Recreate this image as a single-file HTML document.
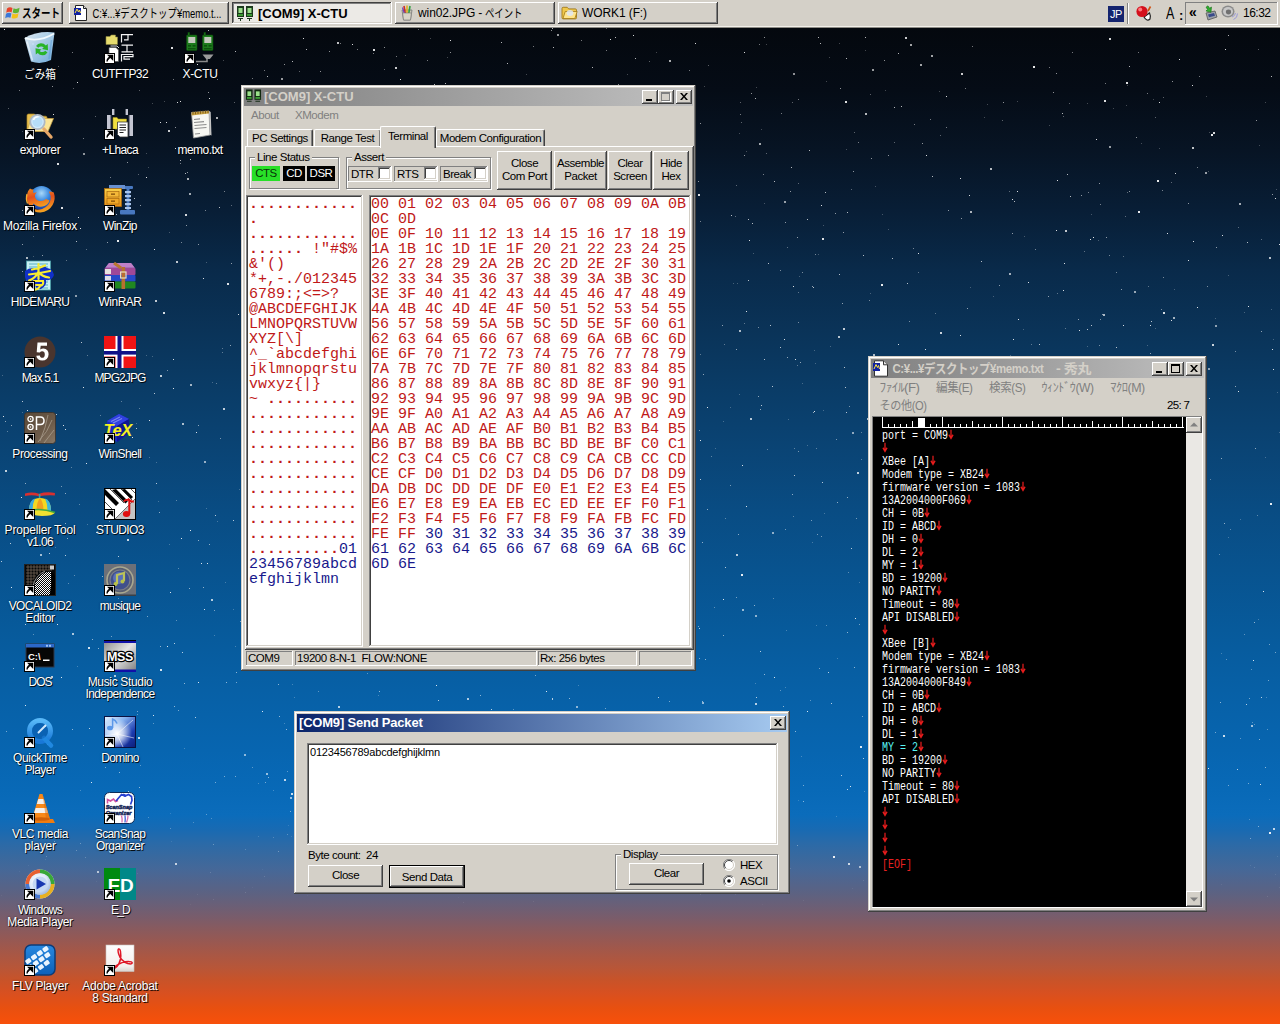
<!DOCTYPE html>
<html><head><meta charset="utf-8"><title>desktop</title>
<style>
*{box-sizing:border-box;margin:0;padding:0}
html,body{width:1280px;height:1024px;overflow:hidden}
body{position:relative;font-family:"Liberation Sans",sans-serif;font-size:12px;color:#000;
background:linear-gradient(to bottom,#04070c 0px,#04080e 28px,#050c16 90px,#071424 150px,#081e36 210px,#092a4a 270px,#0a3358 330px,#0a3c67 390px,#0a4475 450px,#094c83 510px,#08538f 570px,#075a9b 630px,#0760a6 690px,#0765b0 750px,#0869b7 790px,#0b6cbb 815px,#196ab2 830px,#2a6aa8 843px,#38699f 856px,#446899 868px,#50658e 880px,#5c6282 893px,#6b5f76 906px,#7a5c6a 918px,#8a5a5d 930px,#9a5850 943px,#a95744 955px,#b85638 968px,#c85329 980px,#d85020 993px,#e85010 1008px,#f8500a 1024px);}
.abs{position:absolute}
.win{position:absolute;font-size:11.5px;letter-spacing:-.45px;background:#d4d0c8;box-shadow:inset -1px -1px #404040,inset 1px 1px #d4d0c8,inset -2px -2px #808080,inset 2px 2px #fff}
.btn{position:absolute;background:#d4d0c8;box-shadow:inset -1px -1px #404040,inset 1px 1px #fff,inset -2px -2px #808080,inset 2px 2px #d4d0c8;text-align:center;white-space:nowrap}
.sunk{position:absolute;box-shadow:inset -1px -1px #fff,inset 1px 1px #808080,inset -2px -2px #d4d0c8,inset 2px 2px #404040}
.sunk1{position:absolute;box-shadow:inset -1px -1px #fff,inset 1px 1px #808080}
.grp{position:absolute;border:1px solid #808080;box-shadow:1px 1px #fff,inset 1px 1px #fff}
.grp>span{position:absolute;top:-8px;left:5px;background:#d4d0c8;padding:0 2px;line-height:14px;white-space:nowrap}
.tb{position:absolute;height:18px}
.tbi{background:linear-gradient(to right,#808080,#c0c0c0)}
.tba{background:linear-gradient(to right,#0a246a,#a6caf0)}
.tt{position:absolute;font-weight:bold;font-size:13px;line-height:18px;white-space:nowrap;letter-spacing:0}
.cb{position:absolute;width:16px;height:14px;background:#d4d0c8;box-shadow:inset -1px -1px #404040,inset 1px 1px #fff,inset -2px -2px #808080,inset 2px 2px #d4d0c8}
.t{position:absolute;white-space:nowrap}
.mono{font-family:"Liberation Mono",monospace}
.tk{position:absolute;top:2px;height:22px;width:160px;background:#d4d0c8;box-shadow:inset -1px -1px #404040,inset 1px 1px #fff,inset -2px -2px #808080,inset 2px 2px #d4d0c8;font-size:12px;line-height:22px;white-space:nowrap;overflow:hidden}
.tab{position:absolute;background:#d4d0c8;border:1px solid #fff;border-right:1px solid #404040;border-bottom:none;border-radius:2px 2px 0 0;box-shadow:inset -1px 0 #808080;text-align:center;white-space:nowrap}
.ico{position:absolute;width:32px;height:32px}
.lbl{position:absolute;width:110px;text-align:center;color:#fff;font-size:12px;line-height:12px;white-space:nowrap;text-shadow:1px 1px 1px rgba(0,0,0,.9)}

.term{font-size:15px;line-height:15px;letter-spacing:0;white-space:pre}
.term .r{color:#c01818}
.term .b{color:#18188c}

.memo{font-size:10px;line-height:10px;letter-spacing:0;color:#fff;white-space:pre;transform:scaleY(1.3);transform-origin:0 0}
.memo .cy{color:#58f4f4}
.memo svg{display:inline-block;vertical-align:top;margin-top:-.6px}
.memo b{font-weight:normal;color:#e82020}

.ic{position:absolute;width:32px;height:32px;overflow:visible}
.lb{position:absolute;width:120px;text-align:center;color:#fff;font-size:12px;line-height:12px;white-space:nowrap;text-shadow:1px 1px 0 rgba(0,0,0,.85),0 0 2px rgba(0,0,0,.6)}
.lb span{display:block}
svg text{font-family:"Liberation Sans","Noto Sans CJK JP",sans-serif}
</style></head>
<body>
<div class="abs" style="left:0;top:0;width:1px;height:1px;box-shadow:1146px 491px rgba(255,255,255,0.55),1040px 490px rgba(255,255,255,0.70),378px 222px rgba(255,255,255,0.70),1257px 515px rgba(255,255,255,0.35),914px 124px rgba(255,255,255,0.45),185px 173px rgba(255,255,255,0.70),85px 857px rgba(255,255,255,0.23),927px 433px rgba(255,255,255,0.85),1260px 784px rgba(255,255,255,0.85),1276px 189px rgba(255,255,255,0.25),1082px 879px rgba(255,255,255,0.05),73px 88px rgba(255,255,255,0.35),1228px 275px rgba(255,255,255,0.25),950px 824px rgba(255,255,255,0.25),1210px 479px rgba(255,255,255,0.35),478px 559px rgba(255,255,255,0.85),1023px 329px rgba(255,255,255,0.25),174px 706px rgba(255,255,255,0.55),569px 698px rgba(255,255,255,0.55),170px 592px rgba(255,255,255,0.85),645px 288px rgba(255,255,255,0.35),591px 553px rgba(255,255,255,0.25),1153px 99px rgba(255,255,255,0.25),220px 438px rgba(255,255,255,0.45),136px 423px rgba(255,255,255,0.25),1px 895px rgba(255,255,255,0.05),107px 242px rgba(255,255,255,0.55),813px 412px rgba(255,255,255,0.55),1159px 102px rgba(255,255,255,0.85),552px 231px rgba(255,255,255,0.45),637px 117px rgba(255,255,255,0.45),839px 43px rgba(255,255,255,0.25),504px 165px rgba(255,255,255,0.85),22px 131px rgba(255,255,255,0.25),997px 504px rgba(255,255,255,0.35),1145px 726px rgba(255,255,255,0.35),1042px 486px rgba(255,255,255,0.35),268px 777px rgba(255,255,255,0.55),785px 687px rgba(255,255,255,0.25),861px 432px rgba(255,255,255,0.35),552px 28px rgba(255,255,255,0.70),40px 339px rgba(255,255,255,0.35),807px 219px rgba(255,255,255,0.70),1181px 685px rgba(255,255,255,0.25),299px 71px rgba(255,255,255,0.35),528px 480px rgba(255,255,255,0.25),1249px 819px rgba(255,255,255,0.27),606px 878px rgba(255,255,255,0.10),152px 103px rgba(255,255,255,0.25),1193px 241px rgba(255,255,255,0.85),31px 276px rgba(255,255,255,0.70),761px 405px rgba(255,255,255,0.70),260px 492px rgba(255,255,255,0.70),1176px 523px rgba(255,255,255,0.35),374px 423px rgba(255,255,255,0.85),636px 185px rgba(255,255,255,0.35),1250px 865px rgba(255,255,255,0.10),388px 770px rgba(255,255,255,0.35),1134px 785px rgba(255,255,255,0.35),795px 731px rgba(255,255,255,0.55),160px 646px rgba(255,255,255,0.55),212px 76px rgba(255,255,255,0.25),1049px 67px rgba(255,255,255,0.45),802px 272px rgba(255,255,255,0.45),1221px 458px rgba(255,255,255,0.55),1065px 328px rgba(255,255,255,0.35),140px 765px rgba(255,255,255,0.35),981px 261px rgba(255,255,255,0.70),1261px 697px rgba(255,255,255,0.70),573px 103px rgba(255,255,255,0.35),33px 236px rgba(255,255,255,0.25),842px 303px rgba(255,255,255,0.55),123px 283px rgba(255,255,255,0.25),577px 208px rgba(255,255,255,0.45),1171px 571px rgba(255,255,255,0.35),741px 122px rgba(255,255,255,0.35),677px 489px rgba(255,255,255,0.85),1068px 778px rgba(255,255,255,0.70),1208px 171px rgba(255,255,255,0.25),972px 46px rgba(255,255,255,0.45),638px 745px rgba(255,255,255,0.25),1225px 49px rgba(255,255,255,0.85),987px 104px rgba(255,255,255,0.25),637px 776px rgba(255,255,255,0.45),148px 167px rgba(255,255,255,0.25),1118px 491px rgba(255,255,255,0.45),91px 782px rgba(255,255,255,0.85),265px 782px rgba(255,255,255,0.45),173px 388px rgba(255,255,255,0.85),159px 512px rgba(255,255,255,0.55),61px 837px rgba(255,255,255,0.26),29px 614px rgba(255,255,255,0.70),783px 706px rgba(255,255,255,0.55),25px 624px rgba(255,255,255,0.70),164px 101px rgba(255,255,255,0.25),236px 682px rgba(255,255,255,0.45),676px 454px rgba(255,255,255,0.55),1189px 780px rgba(255,255,255,0.55),947px 479px rgba(255,255,255,0.70),1062px 113px rgba(255,255,255,0.70),635px 58px rgba(255,255,255,0.70),984px 117px rgba(255,255,255,0.25),231px 263px rgba(255,255,255,0.55),1258px 826px rgba(255,255,255,0.47),523px 525px rgba(255,255,255,0.25),616px 404px rgba(255,255,255,0.35),1252px 722px rgba(255,255,255,0.35),347px 558px rgba(255,255,255,0.45),905px 703px rgba(255,255,255,0.55),669px 275px rgba(255,255,255,0.55),513px 709px rgba(255,255,255,0.35),882px 677px rgba(255,255,255,0.35),787px 247px rgba(255,255,255,0.35),648px 625px rgba(255,255,255,0.35),275px 167px rgba(255,255,255,0.55),83px 387px rgba(255,255,255,0.85),566px 93px rgba(255,255,255,0.35),922px 143px rgba(255,255,255,0.55),438px 309px rgba(255,255,255,0.55),1064px 419px rgba(255,255,255,0.55),645px 716px rgba(255,255,255,0.85),1279px 887px rgba(255,255,255,0.08),152px 356px rgba(255,255,255,0.25),1244px 312px rgba(255,255,255,0.25),575px 722px rgba(255,255,255,0.70),632px 390px rgba(255,255,255,0.85),1155px 838px rgba(255,255,255,0.12),278px 684px rgba(255,255,255,0.55),388px 493px rgba(255,255,255,0.25),545px 815px rgba(255,255,255,0.22),288px 825px rgba(255,255,255,0.14),236px 672px rgba(255,255,255,0.55),1096px 139px rgba(255,255,255,0.85),755px 683px rgba(255,255,255,0.25),405px 728px rgba(255,255,255,0.35),973px 871px rgba(255,255,255,0.11),22px 210px rgba(255,255,255,0.55),74px 575px rgba(255,255,255,0.35),557px 259px rgba(255,255,255,0.45),1065px 580px rgba(255,255,255,0.70),326px 657px rgba(255,255,255,0.55),458px 897px rgba(255,255,255,0.04),794px 448px rgba(255,255,255,0.35),928px 489px rgba(255,255,255,0.35),13px 668px rgba(255,255,255,0.55),1164px 591px rgba(255,255,255,0.85),702px 542px rgba(255,255,255,0.55),419px 362px rgba(255,255,255,0.25),252px 767px rgba(255,255,255,0.35),799px 276px rgba(255,255,255,0.25),1099px 345px rgba(255,255,255,0.45),32px 296px rgba(255,255,255,0.45),169px 544px rgba(255,255,255,0.25),700px 479px rgba(255,255,255,0.70),563px 459px rgba(255,255,255,0.55),447px 57px rgba(255,255,255,0.25),71px 467px rgba(255,255,255,0.35),686px 573px rgba(255,255,255,0.85),287px 834px rgba(255,255,255,0.27),1057px 180px rgba(255,255,255,0.85),901px 558px rgba(255,255,255,0.55),176px 620px rgba(255,255,255,0.35),1078px 477px rgba(255,255,255,0.70),1150px 325px rgba(255,255,255,0.85),1070px 196px rgba(255,255,255,0.70),1146px 891px rgba(255,255,255,0.07),780px 347px rgba(255,255,255,0.70),623px 241px rgba(255,255,255,0.35),1073px 585px rgba(255,255,255,0.45),1019px 614px rgba(255,255,255,0.35),1097px 448px rgba(255,255,255,0.25),10px 543px rgba(255,255,255,0.70),56px 414px rgba(255,255,255,0.70),1056px 73px rgba(255,255,255,0.55),1152px 585px rgba(255,255,255,0.25),190px 530px rgba(255,255,255,0.85),134px 198px rgba(255,255,255,0.70),847px 497px rgba(255,255,255,0.55),504px 303px rgba(255,255,255,0.55),260px 532px rgba(255,255,255,0.45),975px 472px rgba(255,255,255,0.70),222px 352px rgba(255,255,255,0.35),1265px 457px rgba(255,255,255,0.25),265px 294px rgba(255,255,255,0.85),46px 825px rgba(255,255,255,0.14),318px 226px rgba(255,255,255,0.35),581px 40px rgba(255,255,255,0.45),727px 768px rgba(255,255,255,0.35),1021px 662px rgba(255,255,255,0.25),1192px 539px rgba(255,255,255,0.25),1045px 900px rgba(255,255,255,0.10),404px 284px rgba(255,255,255,0.85),894px 571px rgba(255,255,255,0.25),846px 412px rgba(255,255,255,0.70),327px 658px rgba(255,255,255,0.70),1093px 237px rgba(255,255,255,0.85),1084px 251px rgba(255,255,255,0.35),1111px 899px rgba(255,255,255,0.10),279px 628px rgba(255,255,255,0.35),711px 786px rgba(255,255,255,0.35),1235px 351px rgba(255,255,255,0.45),446px 227px rgba(255,255,255,0.35),274px 127px rgba(255,255,255,0.35),180px 163px rgba(255,255,255,0.45),198px 425px rgba(255,255,255,0.55),863px 880px rgba(255,255,255,0.12),258px 836px rgba(255,255,255,0.17),36px 440px rgba(255,255,255,0.25),1167px 233px rgba(255,255,255,0.85),739px 394px rgba(255,255,255,0.25),1035px 749px rgba(255,255,255,0.85),703px 804px rgba(255,255,255,0.49),387px 730px rgba(255,255,255,0.25),217px 521px rgba(255,255,255,0.25),1129px 66px rgba(255,255,255,0.70),1164px 555px rgba(255,255,255,0.55),388px 178px rgba(255,255,255,0.35),417px 145px rgba(255,255,255,0.35),323px 888px rgba(255,255,255,0.07),195px 717px rgba(255,255,255,0.70),275px 91px rgba(255,255,255,0.85),158px 501px rgba(255,255,255,0.25),800px 362px rgba(255,255,255,0.55),1055px 464px rgba(255,255,255,0.45),430px 468px rgba(255,255,255,0.70),27px 410px rgba(255,255,255,0.85),83px 745px rgba(255,255,255,0.35),835px 213px rgba(255,255,255,0.55),758px 396px rgba(255,255,255,0.55),1238px 227px rgba(255,255,255,0.35),1049px 125px rgba(255,255,255,0.25),173px 359px rgba(255,255,255,0.85),828px 672px rgba(255,255,255,0.70),391px 641px rgba(255,255,255,0.70),698px 626px rgba(255,255,255,0.45),238px 314px rgba(255,255,255,0.85),327px 788px rgba(255,255,255,0.55),675px 164px rgba(255,255,255,0.70),757px 739px rgba(255,255,255,0.55),371px 811px rgba(255,255,255,0.36),378px 239px rgba(255,255,255,0.25),699px 844px rgba(255,255,255,0.19),206px 508px rgba(255,255,255,0.25),1277px 392px rgba(255,255,255,0.25),559px 265px rgba(255,255,255,0.85),691px 334px rgba(255,255,255,0.35),831px 703px rgba(255,255,255,0.70),1091px 214px rgba(255,255,255,0.25),1054px 426px rgba(255,255,255,0.55),436px 685px rgba(255,255,255,0.85),809px 150px rgba(255,255,255,0.70),235px 51px rgba(255,255,255,0.70),485px 138px rgba(255,255,255,0.45),822px 482px rgba(255,255,255,0.70),400px 79px rgba(255,255,255,0.85),22px 412px rgba(255,255,255,0.25),513px 292px rgba(255,255,255,0.45),1126px 377px rgba(255,255,255,0.70),851px 548px rgba(255,255,255,0.70),204px 609px rgba(255,255,255,0.85),156px 483px rgba(255,255,255,0.70),92px 639px rgba(255,255,255,0.55),790px 191px rgba(255,255,255,0.55),1014px 201px rgba(255,255,255,0.70),1221px 653px rgba(255,255,255,0.25),1012px 467px rgba(255,255,255,0.55),1078px 319px rgba(255,255,255,0.55),639px 640px rgba(255,255,255,0.45),585px 571px rgba(255,255,255,0.55),552px 698px rgba(255,255,255,0.70),606px 318px rgba(255,255,255,0.25),501px 42px rgba(255,255,255,0.70),320px 71px rgba(255,255,255,0.55),798px 800px rgba(255,255,255,0.18),814px 350px rgba(255,255,255,0.25),653px 623px rgba(255,255,255,0.25),458px 844px rgba(255,255,255,0.23),978px 764px rgba(255,255,255,0.45),499px 801px rgba(255,255,255,0.18),201px 563px rgba(255,255,255,0.85),295px 507px rgba(255,255,255,0.35),235px 646px rgba(255,255,255,0.25),854px 667px rgba(255,255,255,0.55),417px 148px rgba(255,255,255,0.25),1081px 393px rgba(255,255,255,0.35),744px 155px rgba(255,255,255,0.55),853px 171px rgba(255,255,255,0.55),536px 643px rgba(255,255,255,0.85),859px 624px rgba(255,255,255,0.45),1087px 824px rgba(255,255,255,0.20),263px 325px rgba(255,255,255,0.35),233px 520px rgba(255,255,255,0.70),1039px 344px rgba(255,255,255,0.70),735px 894px rgba(255,255,255,0.07),1248px 306px rgba(255,255,255,0.85),1156px 770px rgba(255,255,255,0.85),389px 633px rgba(255,255,255,0.85),490px 313px rgba(255,255,255,0.35),1028px 282px rgba(255,255,255,0.85),80px 228px rgba(255,255,255,0.85),19px 90px rgba(255,255,255,0.45),870px 293px rgba(255,255,255,0.25),77px 666px rgba(255,255,255,0.25),1109px 255px rgba(255,255,255,0.45),177px 102px rgba(255,255,255,0.85),1127px 192px rgba(255,255,255,0.35),764px 674px rgba(255,255,255,0.55),725px 518px rgba(255,255,255,0.35),703px 374px rgba(255,255,255,0.55),273px 790px rgba(255,255,255,0.25),245px 849px rgba(255,255,255,0.21),1277px 856px rgba(255,255,255,0.12),869px 483px rgba(255,255,255,0.85),798px 292px rgba(255,255,255,0.35),314px 405px rgba(255,255,255,0.85),1221px 884px rgba(255,255,255,0.07),1123px 325px rgba(255,255,255,0.85),376px 873px rgba(255,255,255,0.12),756px 697px rgba(255,255,255,0.70),946px 127px rgba(255,255,255,0.45),1113px 108px rgba(255,255,255,0.25),1155px 470px rgba(255,255,255,0.70),949px 524px rgba(255,255,255,0.45),19px 871px rgba(255,255,255,0.06),436px 345px rgba(255,255,255,0.85),167px 646px rgba(255,255,255,0.85),1013px 339px rgba(255,255,255,0.85),671px 810px rgba(255,255,255,0.30),448px 174px rgba(255,255,255,0.45),669px 701px rgba(255,255,255,0.45),660px 148px rgba(255,255,255,0.85),1165px 479px rgba(255,255,255,0.70),571px 731px rgba(255,255,255,0.55),624px 570px rgba(255,255,255,0.55),453px 353px rgba(255,255,255,0.55),1057px 775px rgba(255,255,255,0.35),740px 114px rgba(255,255,255,0.45),744px 52px rgba(255,255,255,0.85),1197px 433px rgba(255,255,255,0.55),399px 843px rgba(255,255,255,0.37),754px 605px rgba(255,255,255,0.55),317px 581px rgba(255,255,255,0.70),363px 604px rgba(255,255,255,0.35),930px 119px rgba(255,255,255,0.45),45px 859px rgba(255,255,255,0.11),118px 556px rgba(255,255,255,0.70),1162px 190px rgba(255,255,255,0.45),865px 50px rgba(255,255,255,0.25),1119px 623px rgba(255,255,255,0.45),1117px 834px rgba(255,255,255,0.12),167px 370px rgba(255,255,255,0.45),215px 782px rgba(255,255,255,0.45),53px 114px rgba(255,255,255,0.85),294px 697px rgba(255,255,255,0.25),864px 791px rgba(255,255,255,0.28),451px 757px rgba(255,255,255,0.55),1068px 811px rgba(255,255,255,0.29),940px 811px rgba(255,255,255,0.36),691px 386px rgba(255,255,255,0.45),279px 716px rgba(255,255,255,0.55),1100px 527px rgba(255,255,255,0.85),1265px 102px rgba(255,255,255,0.25),715px 448px rgba(255,255,255,0.25),774px 853px rgba(255,255,255,0.09),1108px 503px rgba(255,255,255,0.85),1072px 52px rgba(255,255,255,0.45),20px 755px rgba(255,255,255,0.25),861px 459px rgba(255,255,255,0.35),332px 279px rgba(255,255,255,0.85),343px 412px rgba(255,255,255,0.45),797px 237px rgba(255,255,255,0.55),598px 569px rgba(255,255,255,0.45),965px 88px rgba(255,255,255,0.45),235px 776px rgba(255,255,255,0.45),318px 691px rgba(255,255,255,0.35),939px 91px rgba(255,255,255,0.25),985px 626px rgba(255,255,255,0.25),222px 348px rgba(255,255,255,0.35),735px 216px rgba(255,255,255,0.35),482px 630px rgba(255,255,255,0.70),966px 762px rgba(255,255,255,0.70),458px 548px rgba(255,255,255,0.55),575px 217px rgba(255,255,255,0.55),638px 204px rgba(255,255,255,0.85),1127px 589px rgba(255,255,255,0.55),533px 901px rgba(255,255,255,0.08),700px 440px rgba(255,255,255,0.85),189px 588px rgba(255,255,255,0.55),818px 254px rgba(255,255,255,0.25),275px 250px rgba(255,255,255,0.55),1056px 568px rgba(255,255,255,0.45),118px 834px rgba(255,255,255,0.42),22px 271px rgba(255,255,255,0.55),921px 408px rgba(255,255,255,0.35),863px 758px rgba(255,255,255,0.70),851px 189px rgba(255,255,255,0.35),659px 818px rgba(255,255,255,0.21),1057px 293px rgba(255,255,255,0.35),1268px 680px rgba(255,255,255,0.45),1094px 556px rgba(255,255,255,0.25),1171px 182px rgba(255,255,255,0.35),418px 29px rgba(255,255,255,0.35),262px 869px rgba(255,255,255,0.06),552px 388px rgba(255,255,255,0.70),1081px 761px rgba(255,255,255,0.25),959px 519px rgba(255,255,255,0.25),1201px 794px rgba(255,255,255,0.54),1036px 905px rgba(255,255,255,0.07),384px 47px rgba(255,255,255,0.55),186px 225px rgba(255,255,255,0.55),76px 241px rgba(255,255,255,0.70),1076px 451px rgba(255,255,255,0.55),637px 189px rgba(255,255,255,0.45),830px 346px rgba(255,255,255,0.25),626px 597px rgba(255,255,255,0.55),137px 711px rgba(255,255,255,0.45),287px 104px rgba(255,255,255,0.25),807px 711px rgba(255,255,255,0.85),249px 500px rgba(255,255,255,0.85),25px 483px rgba(255,255,255,0.55),973px 756px rgba(255,255,255,0.35),1155px 328px rgba(255,255,255,0.25),21px 497px rgba(255,255,255,0.85),1261px 239px rgba(255,255,255,0.35),770px 325px rgba(255,255,255,0.70),610px 795px rgba(255,255,255,0.34),803px 801px rgba(255,255,255,0.51),178px 710px rgba(255,255,255,0.45),409px 221px rgba(255,255,255,0.55),224px 776px rgba(255,255,255,0.45),560px 345px rgba(255,255,255,0.70),679px 509px rgba(255,255,255,0.55),783px 874px rgba(255,255,255,0.05),288px 132px rgba(255,255,255,0.70),269px 124px rgba(255,255,255,0.85),367px 673px rgba(255,255,255,0.35),823px 225px rgba(255,255,255,0.25),948px 885px rgba(255,255,255,0.10),184px 748px rgba(255,255,255,0.25),66px 260px rgba(255,255,255,0.35),888px 155px rgba(255,255,255,0.55),148px 817px rgba(255,255,255,0.28),874px 871px rgba(255,255,255,0.17),420px 170px rgba(255,255,255,0.35),790px 868px rgba(255,255,255,0.14),844px 367px rgba(255,255,255,0.70),820px 43px rgba(255,255,255,0.70),650px 744px rgba(255,255,255,0.35),1246px 704px rgba(255,255,255,0.70),533px 46px rgba(255,255,255,0.45),700px 221px rgba(255,255,255,0.45),903px 694px rgba(255,255,255,0.25),773px 598px rgba(255,255,255,0.35),681px 549px rgba(255,255,255,0.45),210px 872px rgba(255,255,255,0.16),324px 758px rgba(255,255,255,0.45),1103px 812px rgba(255,255,255,0.29),479px 589px rgba(255,255,255,0.45),1024px 654px rgba(255,255,255,0.70),1175px 173px rgba(255,255,255,0.85),1056px 230px rgba(255,255,255,0.85),403px 751px rgba(255,255,255,0.70),405px 55px rgba(255,255,255,0.25),500px 167px rgba(255,255,255,0.55),855px 618px rgba(255,255,255,0.85),674px 369px rgba(255,255,255,0.25),545px 397px rgba(255,255,255,0.55),926px 155px rgba(255,255,255,0.85),488px 166px rgba(255,255,255,0.70),1118px 584px rgba(255,255,255,0.70),1147px 93px rgba(255,255,255,0.45),685px 200px rgba(255,255,255,0.70),251px 177px rgba(255,255,255,0.25),744px 323px rgba(255,255,255,0.35),1174px 804px rgba(255,255,255,0.32),339px 878px rgba(255,255,255,0.07),1122px 639px rgba(255,255,255,0.25),65px 493px rgba(255,255,255,0.55),283px 212px rgba(255,255,255,0.45),781px 802px rgba(255,255,255,0.50),33px 634px rgba(255,255,255,0.35),843px 232px rgba(255,255,255,0.55),292px 61px rgba(255,255,255,0.70),242px 423px rgba(255,255,255,0.70),355px 443px rgba(255,255,255,0.45),269px 560px rgba(255,255,255,0.45),1163px 277px rgba(255,255,255,0.45),77px 82px rgba(255,255,255,0.85),296px 715px rgba(255,255,255,0.55),1228px 537px rgba(255,255,255,0.25),707px 509px rgba(255,255,255,0.55),1156px 666px rgba(255,255,255,0.55),576px 797px rgba(255,255,255,0.41),837px 502px rgba(255,255,255,0.55),1159px 148px rgba(255,255,255,0.25),676px 566px rgba(255,255,255,0.70),885px 561px rgba(255,255,255,0.55),656px 52px rgba(255,255,255,0.25),1261px 331px rgba(255,255,255,0.55),771px 777px rgba(255,255,255,0.70),624px 357px rgba(255,255,255,0.70),500px 99px rgba(255,255,255,0.25),915px 892px rgba(255,255,255,0.05),812px 542px rgba(255,255,255,0.25),215px 515px rgba(255,255,255,0.70),1116px 272px rgba(255,255,255,0.45),810px 700px rgba(255,255,255,0.35),755px 98px rgba(255,255,255,0.70),1154px 459px rgba(255,255,255,0.35),863px 255px rgba(255,255,255,0.70),146px 153px rgba(255,255,255,0.25),266px 560px rgba(255,255,255,0.25),1179px 578px rgba(255,255,255,0.55),606px 28px rgba(255,255,255,0.35),612px 773px rgba(255,255,255,0.25),352px 360px rgba(255,255,255,0.25),921px 479px rgba(255,255,255,0.70),289px 434px rgba(255,255,255,0.45),1199px 736px rgba(255,255,255,0.35),627px 74px rgba(255,255,255,0.25),642px 493px rgba(255,255,255,0.45),1020px 360px rgba(255,255,255,0.35),967px 823px rgba(255,255,255,0.20),604px 235px rgba(255,255,255,0.85),400px 88px rgba(255,255,255,0.45),725px 886px rgba(255,255,255,0.08),352px 44px rgba(255,255,255,0.85),1146px 742px rgba(255,255,255,0.35),483px 573px rgba(255,255,255,0.35),217px 79px rgba(255,255,255,0.45),640px 771px rgba(255,255,255,0.45),276px 458px rgba(255,255,255,0.45),911px 740px rgba(255,255,255,0.55),346px 108px rgba(255,255,255,0.35),247px 342px rgba(255,255,255,0.85),402px 735px rgba(255,255,255,0.45),482px 213px rgba(255,255,255,0.70),605px 708px rgba(255,255,255,0.45),1073px 409px rgba(255,255,255,0.25),1056px 632px rgba(255,255,255,0.35),369px 336px rgba(255,255,255,0.85),566px 259px rgba(255,255,255,0.35),184px 683px rgba(255,255,255,0.55),901px 106px rgba(255,255,255,0.70),1087px 103px rgba(255,255,255,0.25),1228px 35px rgba(255,255,255,0.70),1100px 319px rgba(255,255,255,0.45),1164px 461px rgba(255,255,255,0.25),583px 196px rgba(255,255,255,0.35),367px 279px rgba(255,255,255,0.45),1122px 779px rgba(255,255,255,0.25),308px 218px rgba(255,255,255,0.25),945px 664px rgba(255,255,255,0.70),5px 421px rgba(255,255,255,0.55),368px 89px rgba(255,255,255,0.25),736px 597px rgba(255,255,255,0.45),990px 702px rgba(255,255,255,0.25),596px 557px rgba(255,255,255,0.70),1066px 874px rgba(255,255,255,0.18),356px 572px rgba(255,255,255,0.70),338px 826px rgba(255,255,255,0.14),892px 650px rgba(255,255,255,0.35),902px 712px rgba(255,255,255,0.70),524px 819px rgba(255,255,255,0.51),483px 838px rgba(255,255,255,0.21),1114px 528px rgba(255,255,255,0.35),1188px 901px rgba(255,255,255,0.10),535px 538px rgba(255,255,255,0.25),1222px 235px rgba(255,255,255,0.85),1172px 81px rgba(255,255,255,0.55),665px 212px rgba(255,255,255,0.35),36px 650px rgba(255,255,255,0.70),890px 536px rgba(255,255,255,0.70),538px 480px rgba(255,255,255,0.25),234px 102px rgba(255,255,255,0.35),1112px 610px rgba(255,255,255,0.70),487px 838px rgba(255,255,255,0.33),110px 177px rgba(255,255,255,0.45),86px 463px rgba(255,255,255,0.85),1272px 349px rgba(255,255,255,0.85),542px 566px rgba(255,255,255,0.70),181px 538px rgba(255,255,255,0.85),1045px 868px rgba(255,255,255,0.09),521px 415px rgba(255,255,255,0.35),1017px 191px rgba(255,255,255,0.85),1220px 702px rgba(255,255,255,0.55),646px 90px rgba(255,255,255,0.55),746px 506px rgba(255,255,255,0.85),86px 249px rgba(255,255,255,0.35),1230px 529px rgba(255,255,255,0.35),932px 176px rgba(255,255,255,0.70),80px 790px rgba(255,255,255,0.25),839px 274px rgba(255,255,255,0.70),187px 172px rgba(255,255,255,0.55),610px 597px rgba(255,255,255,0.55),156px 462px rgba(255,255,255,0.25),1254px 724px rgba(255,255,255,0.35),518px 330px rgba(255,255,255,0.25),494px 593px rgba(255,255,255,0.55),176px 500px rgba(255,255,255,0.35),632px 400px rgba(255,255,255,0.45),447px 653px rgba(255,255,255,0.25),825px 192px rgba(255,255,255,0.70),119px 693px rgba(255,255,255,0.85),1162px 379px rgba(255,255,255,0.85),363px 632px rgba(255,255,255,0.55),436px 430px rgba(255,255,255,0.55),100px 415px rgba(255,255,255,0.35),711px 456px rgba(255,255,255,0.35),1125px 216px rgba(255,255,255,0.35),417px 519px rgba(255,255,255,0.55),1216px 247px rgba(255,255,255,0.55),631px 805px rgba(255,255,255,0.38),1003px 485px rgba(255,255,255,0.85),371px 723px rgba(255,255,255,0.55),1106px 237px rgba(255,255,255,0.55),149px 457px rgba(255,255,255,0.25),566px 735px rgba(255,255,255,0.45),1271px 309px rgba(255,255,255,0.25),372px 559px rgba(255,255,255,0.85),1048px 296px rgba(255,255,255,0.55),445px 608px rgba(255,255,255,0.45),739px 133px rgba(255,255,255,0.25),736px 185px rgba(255,255,255,0.35),493px 812px rgba(255,255,255,0.55),244px 887px rgba(255,255,255,0.04),787px 357px rgba(255,255,255,0.55),781px 113px rgba(255,255,255,0.45),1063px 290px rgba(255,255,255,0.85),618px 84px rgba(255,255,255,0.55),488px 650px rgba(255,255,255,0.55),384px 69px rgba(255,255,255,0.35),1219px 554px rgba(255,255,255,0.35),427px 60px rgba(255,255,255,0.45),868px 448px rgba(255,255,255,0.55),278px 585px rgba(255,255,255,0.70),1122px 751px rgba(255,255,255,0.45),925px 349px rgba(255,255,255,0.85),301px 414px rgba(255,255,255,0.35),574px 882px rgba(255,255,255,0.11),920px 757px rgba(255,255,255,0.55),791px 167px rgba(255,255,255,0.70),462px 392px rgba(255,255,255,0.25),758px 327px rgba(255,255,255,0.45),441px 653px rgba(255,255,255,0.35),50px 69px rgba(255,255,255,0.85),988px 673px rgba(255,255,255,0.70),610px 39px rgba(255,255,255,0.85),137px 714px rgba(255,255,255,0.35),723px 599px rgba(255,255,255,0.85),766px 153px rgba(255,255,255,0.35),531px 830px rgba(255,255,255,0.13),875px 846px rgba(255,255,255,0.10),1009px 429px rgba(255,255,255,0.25),785px 529px rgba(255,255,255,0.45),1018px 319px rgba(255,255,255,0.85),453px 314px rgba(255,255,255,0.35),413px 440px rgba(255,255,255,0.55),341px 814px rgba(255,255,255,0.28),491px 709px rgba(255,255,255,0.70),700px 123px rgba(255,255,255,0.55),308px 851px rgba(255,255,255,0.21),526px 624px rgba(255,255,255,0.85),1132px 901px rgba(255,255,255,0.07),47px 744px rgba(255,255,255,0.55),746px 151px rgba(255,255,255,0.25),557px 442px rgba(255,255,255,0.25),1014px 414px rgba(255,255,255,0.70),960px 335px rgba(255,255,255,0.85),518px 361px rgba(255,255,255,0.25),72px 52px rgba(255,255,255,0.45),764px 359px rgba(255,255,255,0.70),536px 332px rgba(255,255,255,0.85),961px 218px rgba(255,255,255,0.55),699px 658px rgba(255,255,255,0.45),1179px 59px rgba(255,255,255,0.85),154px 249px rgba(255,255,255,0.85),1271px 76px rgba(255,255,255,0.70),1255px 448px rgba(255,255,255,0.55),565px 93px rgba(255,255,255,0.25),950px 877px rgba(255,255,255,0.11),788px 419px rgba(255,255,255,0.25),278px 851px rgba(255,255,255,0.32),558px 547px rgba(255,255,255,0.45),738px 534px rgba(255,255,255,0.55),306px 49px rgba(255,255,255,0.70),552px 225px rgba(255,255,255,0.35),450px 292px rgba(255,255,255,0.35),1px 561px rgba(255,255,255,0.70),7px 431px rgba(255,255,255,0.35),1010px 588px rgba(255,255,255,0.85),1122px 811px rgba(255,255,255,0.16),1148px 667px rgba(255,255,255,0.85),683px 843px rgba(255,255,255,0.19),212px 382px rgba(255,255,255,0.25),425px 348px rgba(255,255,255,0.85),320px 433px rgba(255,255,255,0.35),329px 872px rgba(255,255,255,0.08),1273px 369px rgba(255,255,255,0.85),1154px 530px rgba(255,255,255,0.45),849px 406px rgba(255,255,255,0.45),1093px 403px rgba(255,255,255,0.55),510px 270px rgba(255,255,255,0.45),364px 360px rgba(255,255,255,0.70),258px 783px rgba(255,255,255,0.25),209px 98px rgba(255,255,255,0.85),230px 345px rgba(255,255,255,0.55),984px 552px rgba(255,255,255,0.25),1272px 194px rgba(255,255,255,0.55),109px 521px rgba(255,255,255,0.45),813px 287px rgba(255,255,255,0.70),803px 785px rgba(255,255,255,0.45),515px 761px rgba(255,255,255,0.45),669px 760px rgba(255,255,255,0.35),419px 369px rgba(255,255,255,0.70),264px 876px rgba(255,255,255,0.14),257px 458px rgba(255,255,255,0.70),550px 786px rgba(255,255,255,0.35),411px 156px rgba(255,255,255,0.55),597px 664px rgba(255,255,255,0.35),378px 695px rgba(255,255,255,0.25),1199px 511px rgba(255,255,255,0.85),273px 837px rgba(255,255,255,0.21),555px 732px rgba(255,255,255,0.55),812px 286px rgba(255,255,255,0.55),284px 723px rgba(255,255,255,0.25),242px 189px rgba(255,255,255,0.25),585px 226px rgba(255,255,255,0.45),1102px 776px rgba(255,255,255,0.25),675px 442px rgba(255,255,255,0.25),1111px 880px rgba(255,255,255,0.10),764px 203px rgba(255,255,255,0.25),898px 344px rgba(255,255,255,0.85),458px 318px rgba(255,255,255,0.55),1265px 767px rgba(255,255,255,0.55),290px 811px rgba(255,255,255,0.46),443px 426px rgba(255,255,255,0.70),300px 317px rgba(255,255,255,0.55),219px 207px rgba(255,255,255,0.70),999px 285px rgba(255,255,255,0.55),311px 151px rgba(255,255,255,0.45),553px 47px rgba(255,255,255,0.70),294px 610px rgba(255,255,255,0.45),819px 668px rgba(255,255,255,0.45),466px 357px rgba(255,255,255,0.25),411px 521px rgba(255,255,255,0.45),531px 592px rgba(255,255,255,0.70),310px 80px rgba(255,255,255,0.25),633px 35px rgba(255,255,255,0.85),8px 108px rgba(255,255,255,0.35),990px 372px rgba(255,255,255,0.35),414px 835px rgba(255,255,255,0.27),65px 523px rgba(255,255,255,0.55),1146px 387px rgba(255,255,255,0.55),118px 598px rgba(255,255,255,0.35),1263px 591px rgba(255,255,255,0.85),1275px 874px rgba(255,255,255,0.10),386px 311px rgba(255,255,255,0.45),907px 283px rgba(255,255,255,0.70),96px 881px rgba(255,255,255,0.06),54px 905px rgba(255,255,255,0.05),243px 579px rgba(255,255,255,0.85),555px 104px rgba(255,255,255,0.45),1138px 52px rgba(255,255,255,0.45),1053px 92px rgba(255,255,255,0.55),430px 38px rgba(255,255,255,0.25),22px 401px rgba(255,255,255,0.70),501px 299px rgba(255,255,255,0.85),817px 534px rgba(255,255,255,0.45),1088px 850px rgba(255,255,255,0.33),206px 814px rgba(255,255,255,0.35),836px 439px rgba(255,255,255,0.45),48px 666px rgba(255,255,255,0.25),288px 618px rgba(255,255,255,0.35),795px 359px rgba(255,255,255,0.85),1036px 406px rgba(255,255,255,0.85),746px 311px rgba(255,255,255,0.85),921px 681px rgba(255,255,255,0.45),571px 347px rgba(255,255,255,0.25),658px 697px rgba(255,255,255,0.70),541px 124px rgba(255,255,255,0.45),368px 246px rgba(255,255,255,0.35),267px 76px rgba(255,255,255,0.70),421px 339px rgba(255,255,255,0.35),216px 383px rgba(255,255,255,0.35),763px 174px rgba(255,255,255,0.45),882px 214px rgba(255,255,255,0.25),818px 37px rgba(255,255,255,0.70),826px 81px rgba(255,255,255,0.25),1100px 357px rgba(255,255,255,0.35),357px 49px rgba(255,255,255,0.45),1206px 96px rgba(255,255,255,0.25),658px 620px rgba(255,255,255,0.55),449px 512px rgba(255,255,255,0.55),364px 446px rgba(255,255,255,0.45),798px 99px rgba(255,255,255,0.45),731px 215px rgba(255,255,255,0.70),303px 38px rgba(255,255,255,0.85),774px 677px rgba(255,255,255,0.85),434px 84px rgba(255,255,255,0.70),705px 659px rgba(255,255,255,0.55),868px 904px rgba(255,255,255,0.10),233px 609px rgba(255,255,255,0.25),928px 885px rgba(255,255,255,0.08),956px 709px rgba(255,255,255,0.55),787px 884px rgba(255,255,255,0.10),768px 263px rgba(255,255,255,0.70),1173px 582px rgba(255,255,255,0.25),65px 555px rgba(255,255,255,0.70),925px 670px rgba(255,255,255,0.55),1215px 318px rgba(255,255,255,0.25),111px 636px rgba(255,255,255,0.45),1099px 183px rgba(255,255,255,0.55),524px 364px rgba(255,255,255,0.85),640px 665px rgba(255,255,255,0.35),960px 782px rgba(255,255,255,0.70),107px 439px rgba(255,255,255,0.35),1005px 798px rgba(255,255,255,0.19),382px 267px rgba(255,255,255,0.85),291px 836px rgba(255,255,255,0.12),213px 844px rgba(255,255,255,0.30),535px 285px rgba(255,255,255,0.25),78px 217px rgba(255,255,255,0.85),513px 378px rgba(255,255,255,0.70),714px 854px rgba(255,255,255,0.20),1098px 240px rgba(255,255,255,0.25),401px 465px rgba(255,255,255,0.55),488px 314px rgba(255,255,255,0.25),1136px 137px rgba(255,255,255,0.55),1005px 834px rgba(255,255,255,0.17),1017px 101px rgba(255,255,255,0.25),1124px 817px rgba(255,255,255,0.15),310px 843px rgba(255,255,255,0.19),205px 210px rgba(255,255,255,0.45),708px 65px rgba(255,255,255,0.35),590px 881px rgba(255,255,255,0.04),372px 454px rgba(255,255,255,0.70),63px 425px rgba(255,255,255,0.85),953px 659px rgba(255,255,255,0.55),180px 101px rgba(255,255,255,0.85),1090px 239px rgba(255,255,255,0.85),403px 351px rgba(255,255,255,0.70),882px 712px rgba(255,255,255,0.55),695px 43px rgba(255,255,255,0.85),570px 350px rgba(255,255,255,0.85),427px 645px rgba(255,255,255,0.85),370px 242px rgba(255,255,255,0.35),1188px 203px rgba(255,255,255,0.55),264px 70px rgba(255,255,255,0.45),529px 146px rgba(255,255,255,0.45),1275px 652px rgba(255,255,255,0.45),401px 342px rgba(255,255,255,0.25),420px 98px rgba(255,255,255,0.85),737px 762px rgba(255,255,255,0.45),836px 816px rgba(255,255,255,0.22),146px 177px rgba(255,255,255,0.85),869px 300px rgba(255,255,255,0.45),1254px 867px rgba(255,255,255,0.15),935px 313px rgba(255,255,255,0.35),253px 546px rgba(255,255,255,0.25),1052px 382px rgba(255,255,255,0.85),481px 455px rgba(255,255,255,0.55),240px 621px rgba(255,255,255,0.45),586px 154px rgba(255,255,255,0.25),931px 720px rgba(255,255,255,0.35),793px 516px rgba(255,255,255,0.35),847px 789px rgba(255,255,255,0.70),918px 253px rgba(255,255,255,0.85),751px 93px rgba(255,255,255,0.55),576px 369px rgba(255,255,255,0.70),548px 479px rgba(255,255,255,0.45),25px 705px rgba(255,255,255,0.85),501px 653px rgba(255,255,255,0.25),767px 449px rgba(255,255,255,0.35),515px 635px rgba(255,255,255,0.55),570px 458px rgba(255,255,255,0.45),1209px 132px rgba(255,255,255,0.25),203px 587px rgba(255,255,255,0.55),181px 242px rgba(255,255,255,0.45),766px 44px rgba(255,255,255,0.25),1208px 768px rgba(255,255,255,0.85),704px 742px rgba(255,255,255,0.25),318px 712px rgba(255,255,255,0.55),740px 102px rgba(255,255,255,0.35),1035px 503px rgba(255,255,255,0.45),1240px 519px rgba(255,255,255,0.25),42px 255px rgba(255,255,255,0.55),470px 471px rgba(255,255,255,0.85),225px 582px rgba(255,255,255,0.25),946px 96px rgba(255,255,255,0.85),446px 438px rgba(255,255,255,0.70),428px 626px rgba(255,255,255,0.55),292px 406px rgba(255,255,255,0.70),196px 432px rgba(255,255,255,0.85),171px 841px rgba(255,255,255,0.11),1275px 198px rgba(255,255,255,0.85),970px 287px rgba(255,255,255,0.25),959px 471px rgba(255,255,255,0.35),759px 44px rgba(255,255,255,0.45),49px 880px rgba(255,255,255,0.04),845px 387px rgba(255,255,255,0.70),1092px 602px rgba(255,255,255,0.25),193px 822px rgba(255,255,255,0.26),1155px 547px rgba(255,255,255,0.25),1163px 97px rgba(255,255,255,0.35),180px 160px rgba(255,255,255,0.70),631px 552px rgba(255,255,255,0.45),503px 389px rgba(255,255,255,0.35),847px 632px rgba(255,255,255,0.55),445px 83px rgba(255,255,255,0.70),348px 490px rgba(255,255,255,0.70),940px 135px rgba(255,255,255,0.35),213px 899px rgba(255,255,255,0.10),294px 186px rgba(255,255,255,0.70),355px 565px rgba(255,255,255,0.55),1253px 660px rgba(255,255,255,0.85),846px 149px rgba(255,255,255,0.25),314px 262px rgba(255,255,255,0.25),771px 780px rgba(255,255,255,0.35),1087px 329px rgba(255,255,255,0.70),829px 57px rgba(255,255,255,0.25),615px 533px rgba(255,255,255,0.70),94px 686px rgba(255,255,255,0.55),613px 454px rgba(255,255,255,0.25),534px 247px rgba(255,255,255,0.70),858px 142px rgba(255,255,255,0.45),417px 528px rgba(255,255,255,0.85),282px 601px rgba(255,255,255,0.70),198px 540px rgba(255,255,255,0.55),613px 668px rgba(255,255,255,0.45),1228px 785px rgba(255,255,255,0.45),753px 253px rgba(255,255,255,0.25),976px 467px rgba(255,255,255,0.55),881px 395px rgba(255,255,255,0.45),239px 489px rgba(255,255,255,0.25),1087px 346px rgba(255,255,255,0.25),1081px 195px rgba(255,255,255,0.55),660px 588px rgba(255,255,255,0.55),456px 866px rgba(255,255,255,0.23),761px 129px rgba(255,255,255,0.25),736px 349px rgba(255,255,255,0.55),1064px 263px rgba(255,255,255,0.85),998px 567px rgba(255,255,255,0.85),764px 37px rgba(255,255,255,0.55),214px 635px rgba(255,255,255,0.25),1215px 732px rgba(255,255,255,0.45),748px 280px rgba(255,255,255,0.70),755px 738px rgba(255,255,255,0.45),1247px 242px rgba(255,255,255,0.70),645px 85px rgba(255,255,255,0.35),241px 537px rgba(255,255,255,0.70),705px 804px rgba(255,255,255,0.18),190px 904px rgba(255,255,255,0.05),1207px 286px rgba(255,255,255,0.45),871px 855px rgba(255,255,255,0.30),823px 410px rgba(255,255,255,0.25),1171px 320px rgba(255,255,255,0.85),175px 127px rgba(255,255,255,0.55),512px 258px rgba(255,255,255,0.45),649px 61px rgba(255,255,255,0.35),319px 867px rgba(255,255,255,0.12),578px 685px rgba(255,255,255,0.25),1004px 809px rgba(255,255,255,0.17),1279px 432px rgba(255,255,255,0.25),283px 593px rgba(255,255,255,0.45),45px 682px rgba(255,255,255,0.70),433px 727px rgba(255,255,255,0.70),11px 587px rgba(255,255,255,0.85),856px 518px rgba(255,255,255,0.45),153px 723px rgba(255,255,255,0.35),170px 828px rgba(255,255,255,0.29),286px 729px rgba(255,255,255,0.55),916px 803px rgba(255,255,255,0.60),241px 475px rgba(255,255,255,0.55),146px 355px rgba(255,255,255,0.25),728px 882px rgba(255,255,255,0.14),1122px 879px rgba(255,255,255,0.15),242px 143px rgba(255,255,255,0.55),1147px 345px rgba(255,255,255,0.25),198px 244px rgba(255,255,255,0.55),1098px 359px rgba(255,255,255,0.35),252px 887px rgba(255,255,255,0.05),967px 308px rgba(255,255,255,0.55),884px 60px rgba(255,255,255,0.55),1012px 233px rgba(255,255,255,0.55),794px 475px rgba(255,255,255,0.70),986px 825px rgba(255,255,255,0.14),341px 590px rgba(255,255,255,0.70),413px 359px rgba(255,255,255,0.25),335px 382px rgba(255,255,255,0.85),772px 386px rgba(255,255,255,0.70),1064px 850px rgba(255,255,255,0.33),927px 425px rgba(255,255,255,0.70),946px 630px rgba(255,255,255,0.45),1195px 817px rgba(255,255,255,0.21),811px 520px rgba(255,255,255,0.45),1002px 120px rgba(255,255,255,0.35),535px 675px rgba(255,255,255,0.45),841px 775px rgba(255,255,255,0.70),526px 74px rgba(255,255,255,0.25),521px 849px rgba(255,255,255,0.21),436px 277px rgba(255,255,255,0.55),133px 660px rgba(255,255,255,0.70),847px 212px rgba(255,255,255,0.70),792px 494px rgba(255,255,255,0.55),473px 148px rgba(255,255,255,0.35),1269px 799px rgba(255,255,255,0.18),627px 723px rgba(255,255,255,0.70),307px 895px rgba(255,255,255,0.04),720px 743px rgba(255,255,255,0.70),1129px 191px rgba(255,255,255,0.55),1002px 369px rgba(255,255,255,0.35),730px 485px rgba(255,255,255,0.45),505px 128px rgba(255,255,255,0.35),408px 251px rgba(255,255,255,0.70),1248px 783px rgba(255,255,255,0.45),334px 151px rgba(255,255,255,0.35),344px 624px rgba(255,255,255,0.45),664px 733px rgba(255,255,255,0.45),595px 139px rgba(255,255,255,0.70),542px 878px rgba(255,255,255,0.05),733px 283px rgba(255,255,255,0.25),1100px 204px rgba(255,255,255,0.45),600px 711px rgba(255,255,255,0.45),1148px 286px rgba(255,255,255,0.35),993px 296px rgba(255,255,255,0.25),59px 307px rgba(255,255,255,0.45),568px 840px rgba(255,255,255,0.32),798px 183px rgba(255,255,255,0.35),1114px 869px rgba(255,255,255,0.09),182px 652px rgba(255,255,255,0.70),333px 847px rgba(255,255,255,0.28),1206px 796px rgba(255,255,255,0.64),627px 294px rgba(255,255,255,0.25),742px 465px rgba(255,255,255,0.85),1111px 834px rgba(255,255,255,0.17),927px 520px rgba(255,255,255,0.85),707px 407px rgba(255,255,255,0.85),1035px 249px rgba(255,255,255,0.45),714px 607px rgba(255,255,255,0.35),1126px 105px rgba(255,255,255,0.25),147px 616px rgba(255,255,255,0.45),208px 30px rgba(255,255,255,0.70),399px 150px rgba(255,255,255,0.45),724px 344px rgba(255,255,255,0.35),139px 90px rgba(255,255,255,0.35),846px 58px rgba(255,255,255,0.70),1067px 174px rgba(255,255,255,0.70),894px 107px rgba(255,255,255,0.70),378px 723px rgba(255,255,255,0.25),725px 567px rgba(255,255,255,0.70),404px 538px rgba(255,255,255,0.85),854px 132px rgba(255,255,255,0.35),395px 525px rgba(255,255,255,0.25),997px 738px rgba(255,255,255,0.25),1149px 598px rgba(255,255,255,0.25),614px 166px rgba(255,255,255,0.45),449px 371px rgba(255,255,255,0.85),309px 307px rgba(255,255,255,0.70),875px 186px rgba(255,255,255,0.25),1002px 651px rgba(255,255,255,0.70),1170px 730px rgba(255,255,255,0.70),647px 655px rgba(255,255,255,0.35),1063px 116px rgba(255,255,255,0.35),223px 60px rgba(255,255,255,0.25),616px 333px rgba(255,255,255,0.25),65px 452px rgba(255,255,255,0.35),381px 877px rgba(255,255,255,0.17),1064px 647px rgba(255,255,255,0.70),170px 813px rgba(255,255,255,0.16),139px 408px rgba(255,255,255,0.35),475px 432px rgba(255,255,255,0.55),687px 386px rgba(255,255,255,0.35),802px 383px rgba(255,255,255,0.25),495px 816px rgba(255,255,255,0.28),1199px 76px rgba(255,255,255,0.45),686px 566px rgba(255,255,255,0.70),720px 719px rgba(255,255,255,0.55),480px 695px rgba(255,255,255,0.55),411px 207px rgba(255,255,255,0.35),519px 244px rgba(255,255,255,0.55),452px 518px rgba(255,255,255,0.45),487px 217px rgba(255,255,255,0.85),1249px 698px rgba(255,255,255,0.45),1070px 637px rgba(255,255,255,0.70),1174px 289px rgba(255,255,255,0.25),636px 216px rgba(255,255,255,0.35),617px 95px rgba(255,255,255,0.70),418px 365px rgba(255,255,255,0.85),507px 63px rgba(255,255,255,0.70),160px 122px rgba(255,255,255,0.85),1031px 809px rgba(255,255,255,0.23),446px 480px rgba(255,255,255,0.25),1140px 452px rgba(255,255,255,0.35),730px 407px rgba(255,255,255,0.25),792px 102px rgba(255,255,255,0.35),476px 457px rgba(255,255,255,0.45),423px 837px rgba(255,255,255,0.26),1151px 321px rgba(255,255,255,0.70),139px 787px rgba(255,255,255,0.55),28px 865px rgba(255,255,255,0.07),67px 538px rgba(255,255,255,0.55),870px 94px rgba(255,255,255,0.35),138px 174px rgba(255,255,255,0.35),1009px 191px rgba(255,255,255,0.35),700px 354px rgba(255,255,255,0.35),290px 167px rgba(255,255,255,0.85),87px 355px rgba(255,255,255,0.35),277px 270px rgba(255,255,255,0.85),485px 722px rgba(255,255,255,0.85),929px 712px rgba(255,255,255,0.45),246px 409px rgba(255,255,255,0.45),146px 177px rgba(255,255,255,0.35),711px 770px rgba(255,255,255,0.85),252px 78px rgba(255,255,255,0.45),374px 356px rgba(255,255,255,0.70),560px 153px rgba(255,255,255,0.70),1106px 562px rgba(255,255,255,0.70),1078px 481px rgba(255,255,255,0.45),166px 122px rgba(255,255,255,0.85),33px 256px rgba(255,255,255,0.25),1031px 344px rgba(255,255,255,0.35),676px 192px rgba(255,255,255,0.85),214px 610px rgba(255,255,255,0.45),1224px 523px rgba(255,255,255,0.55),1235px 386px rgba(255,255,255,0.55),79px 504px rgba(255,255,255,0.35),960px 178px rgba(255,255,255,0.85),898px 53px rgba(255,255,255,0.70),1112px 438px rgba(255,255,255,0.25),333px 316px rgba(255,255,255,0.25),821px 205px rgba(255,255,255,0.85),433px 870px rgba(255,255,255,0.06),450px 52px rgba(255,255,255,0.55),1022px 846px rgba(255,255,255,0.29),129px 696px rgba(255,255,255,0.55),373px 53px rgba(255,255,255,0.45),340px 43px rgba(255,255,255,0.45),689px 70px rgba(255,255,255,0.45),1267px 896px rgba(255,255,255,0.10),968px 406px rgba(255,255,255,0.45),649px 666px rgba(255,255,255,0.35),294px 393px rgba(255,255,255,0.70),1254px 622px rgba(255,255,255,0.55),1106px 467px rgba(255,255,255,0.70),525px 499px rgba(255,255,255,0.45),477px 531px rgba(255,255,255,0.85),333px 664px rgba(255,255,255,0.55),1149px 549px rgba(255,255,255,0.45),350px 811px rgba(255,255,255,0.56),481px 349px rgba(255,255,255,0.70),826px 625px rgba(255,255,255,0.35),695px 746px rgba(255,255,255,0.45),198px 682px rgba(255,255,255,0.85),6px 731px rgba(255,255,255,0.45),1145px 518px rgba(255,255,255,0.25),1053px 537px rgba(255,255,255,0.85),3px 416px rgba(255,255,255,0.85),821px 536px rgba(255,255,255,0.45),1175px 537px rgba(255,255,255,0.85),946px 610px rgba(255,255,255,0.25),654px 120px rgba(255,255,255,0.55),986px 682px rgba(255,255,255,0.25),292px 684px rgba(255,255,255,0.25),1102px 314px rgba(255,255,255,0.55),173px 79px rgba(255,255,255,0.45),103px 847px rgba(255,255,255,0.14),816px 625px rgba(255,255,255,0.25),399px 288px rgba(255,255,255,0.85),209px 544px rgba(255,255,255,0.55),1136px 389px rgba(255,255,255,0.25),1003px 102px rgba(255,255,255,0.55),595px 183px rgba(255,255,255,0.45),1030px 889px rgba(255,255,255,0.10),402px 378px rgba(255,255,255,0.85),913px 248px rgba(255,255,255,0.45),262px 711px rgba(255,255,255,0.85),560px 280px rgba(255,255,255,0.45),360px 848px rgba(255,255,255,0.10),974px 862px rgba(255,255,255,0.13),499px 759px rgba(255,255,255,0.25),46px 856px rgba(255,255,255,0.24),702px 701px rgba(255,255,255,0.55),1250px 838px rgba(255,255,255,0.40),132px 437px rgba(255,255,255,0.85),224px 191px rgba(255,255,255,0.45),798px 322px rgba(255,255,255,0.45),380px 288px rgba(255,255,255,0.70),535px 738px rgba(255,255,255,0.85),256px 665px rgba(255,255,255,0.85),119px 772px rgba(255,255,255,0.55),807px 445px rgba(255,255,255,0.25),541px 610px rgba(255,255,255,0.55),1007px 682px rgba(255,255,255,0.35),723px 421px rgba(255,255,255,0.25),329px 51px rgba(255,255,255,0.55),468px 842px rgba(255,255,255,0.15),1266px 697px rgba(255,255,255,0.25),313px 739px rgba(255,255,255,0.70),647px 469px rgba(255,255,255,0.55),383px 307px rgba(255,255,255,0.25),546px 691px rgba(255,255,255,0.85),211px 818px rgba(255,255,255,0.27),111px 364px rgba(255,255,255,0.25),1091px 325px rgba(255,255,255,0.70),620px 662px rgba(255,255,255,0.55),116px 820px rgba(255,255,255,0.27),572px 139px rgba(255,255,255,0.35),999px 563px rgba(255,255,255,0.25),197px 64px rgba(255,255,255,0.85),102px 576px rgba(255,255,255,0.55),1077px 802px rgba(255,255,255,0.25),408px 323px rgba(255,255,255,0.70),494px 400px rgba(255,255,255,0.55),815px 363px rgba(255,255,255,0.25),106px 375px rgba(255,255,255,0.45),1079px 330px rgba(255,255,255,0.85),848px 572px rgba(255,255,255,0.35),482px 444px rgba(255,255,255,0.55),249px 108px rgba(255,255,255,0.55),974px 471px rgba(255,255,255,0.85),1136px 453px rgba(255,255,255,0.85),514px 540px rgba(255,255,255,0.70),859px 582px rgba(255,255,255,0.25),178px 568px rgba(255,255,255,0.35),116px 214px rgba(255,255,255,0.70),376px 181px rgba(255,255,255,0.70),1197px 307px rgba(255,255,255,0.85),549px 354px rgba(255,255,255,0.85),118px 70px rgba(255,255,255,0.55),885px 90px rgba(255,255,255,0.25),396px 514px rgba(255,255,255,0.45),1127px 85px rgba(255,255,255,0.25),551px 30px rgba(255,255,255,0.55),1259px 739px rgba(255,255,255,0.55),871px 158px rgba(255,255,255,0.55),501px 614px rgba(255,255,255,0.55),491px 862px rgba(255,255,255,0.25),837px 658px rgba(255,255,255,0.25),1155px 117px rgba(255,255,255,0.35),112px 279px rgba(255,255,255,0.70),824px 513px rgba(255,255,255,0.25),149px 420px rgba(255,255,255,0.85),959px 428px rgba(255,255,255,0.70),425px 136px rgba(255,255,255,0.35),996px 900px rgba(255,255,255,0.10),245px 351px rgba(255,255,255,0.45),45px 339px rgba(255,255,255,0.35),1042px 883px rgba(255,255,255,0.11),816px 448px rgba(255,255,255,0.35),69px 291px rgba(255,255,255,0.25),548px 753px rgba(255,255,255,0.55),749px 240px rgba(255,255,255,0.85),419px 475px rgba(255,255,255,0.55),646px 473px rgba(255,255,255,0.35),47px 666px rgba(255,255,255,0.55),1273px 339px rgba(255,255,255,0.25),969px 494px rgba(255,255,255,0.85),931px 591px rgba(255,255,255,0.85),1033px 413px rgba(255,255,255,0.55),153px 715px rgba(255,255,255,0.85),606px 260px rgba(255,255,255,0.35),1237px 769px rgba(255,255,255,0.70),931px 699px rgba(255,255,255,0.55),611px 245px rgba(255,255,255,0.35),174px 643px rgba(255,255,255,0.70),699px 628px rgba(255,255,255,0.70),801px 756px rgba(255,255,255,0.25),852px 888px rgba(255,255,255,0.07),873px 812px rgba(255,255,255,0.29),1256px 120px rgba(255,255,255,0.55),815px 254px rgba(255,255,255,0.45),888px 229px rgba(255,255,255,0.25),1193px 538px rgba(255,255,255,0.25),441px 868px rgba(255,255,255,0.22),136px 428px rgba(255,255,255,0.70),695px 757px rgba(255,255,255,0.85),1185px 401px rgba(255,255,255,0.55),524px 285px rgba(255,255,255,0.85),1149px 725px rgba(255,255,255,0.55),321px 585px rgba(255,255,255,0.25),1197px 167px rgba(255,255,255,0.45),1042px 857px rgba(255,255,255,0.08),1161px 309px rgba(255,255,255,0.45),1014px 568px rgba(255,255,255,0.45),1012px 199px rgba(255,255,255,0.85),592px 527px rgba(255,255,255,0.55),297px 720px rgba(255,255,255,0.25),98px 648px rgba(255,255,255,0.55),1085px 501px rgba(255,255,255,0.70),1166px 478px rgba(255,255,255,0.25),722px 325px rgba(255,255,255,0.55),106px 805px rgba(255,255,255,0.17),615px 37px rgba(255,255,255,0.70),344px 736px rgba(255,255,255,0.85),442px 400px rgba(255,255,255,0.55),560px 750px rgba(255,255,255,0.35),1184px 395px rgba(255,255,255,0.70),49px 553px rgba(255,255,255,0.70),814px 411px rgba(255,255,255,0.85),304px 442px rgba(255,255,255,0.45),1251px 669px rgba(255,255,255,0.35),364px 239px rgba(255,255,255,0.25),175px 148px rgba(255,255,255,0.85),54px 841px rgba(255,255,255,0.38),541px 223px rgba(255,255,255,0.25),117px 528px rgba(255,255,255,0.85),57px 624px rgba(255,255,255,0.85),596px 866px rgba(255,255,255,0.12),1279px 244px rgba(255,255,255,0.85),658px 399px rgba(255,255,255,0.45),447px 859px rgba(255,255,255,0.18),642px 746px rgba(255,255,255,0.25),1167px 480px rgba(255,255,255,0.45),1034px 651px rgba(255,255,255,0.45),1123px 256px rgba(255,255,255,0.35),1269px 644px rgba(255,255,255,0.45),698px 181px rgba(255,255,255,0.55),359px 469px rgba(255,255,255,0.35),351px 634px rgba(255,255,255,0.55),1238px 391px rgba(255,255,255,0.85),442px 384px rgba(255,255,255,0.45),463px 902px rgba(255,255,255,0.08),121px 401px rgba(255,255,255,0.35),96px 532px rgba(255,255,255,0.85),128px 791px rgba(255,255,255,0.67),1194px 584px rgba(255,255,255,0.25),663px 125px rgba(255,255,255,0.25),723px 635px rgba(255,255,255,0.55),1092px 642px rgba(255,255,255,0.55),208px 92px rgba(255,255,255,0.55),1258px 49px rgba(255,255,255,0.35),558px 595px rgba(255,255,255,0.25),312px 711px rgba(255,255,255,0.85),660px 722px rgba(255,255,255,0.25),591px 506px rgba(255,255,255,0.35),42px 602px rgba(255,255,255,0.45),737px 283px rgba(255,255,255,0.25),598px 282px rgba(255,255,255,0.45),30px 295px rgba(255,255,255,0.25),635px 400px rgba(255,255,255,0.55),353px 634px rgba(255,255,255,0.45),231px 205px rgba(255,255,255,0.35),197px 894px rgba(255,255,255,0.08),1048px 721px rgba(255,255,255,0.35),1116px 347px rgba(255,255,255,0.70),909px 846px rgba(255,255,255,0.35),1024px 763px rgba(255,255,255,0.35),798px 451px rgba(255,255,255,0.45),543px 544px rgba(255,255,255,0.55),1083px 482px rgba(255,255,255,0.70),458px 573px rgba(255,255,255,0.45),606px 50px rgba(255,255,255,0.45),65px 429px rgba(255,255,255,0.85),80px 843px rgba(255,255,255,0.30),584px 495px rgba(255,255,255,0.70),752px 223px rgba(255,255,255,0.70),947px 728px rgba(255,255,255,0.85),931px 408px rgba(255,255,255,0.25),1026px 434px rgba(255,255,255,0.70),1188px 260px rgba(255,255,255,0.85),398px 883px rgba(255,255,255,0.04),505px 140px rgba(255,255,255,0.70),1113px 371px rgba(255,255,255,0.55),1138px 555px rgba(255,255,255,0.45),592px 67px rgba(255,255,255,0.70),154px 393px rgba(255,255,255,0.70),27px 143px rgba(255,255,255,0.35),797px 845px rgba(255,255,255,0.35),226px 682px rgba(255,255,255,0.55),891px 603px rgba(255,255,255,0.70),1119px 808px rgba(255,255,255,0.47),1192px 85px rgba(255,255,255,0.85),140px 205px rgba(255,255,255,0.55),496px 790px rgba(255,255,255,0.85),443px 539px rgba(255,255,255,0.55),1113px 695px rgba(255,255,255,0.45),1258px 619px rgba(255,255,255,0.25),450px 40px rgba(255,255,255,0.85),438px 700px rgba(255,255,255,0.70),497px 102px rgba(255,255,255,0.45),363px 369px rgba(255,255,255,0.70),207px 563px rgba(255,255,255,0.85),537px 216px rgba(255,255,255,0.35),458px 861px rgba(255,255,255,0.11),704px 86px rgba(255,255,255,0.25),287px 771px rgba(255,255,255,0.35),61px 677px rgba(255,255,255,0.85),969px 195px rgba(255,255,255,0.85),531px 357px rgba(255,255,255,0.85),654px 216px rgba(255,255,255,0.85),1259px 145px rgba(255,255,255,0.25),89px 728px rgba(255,255,255,0.70),784px 339px rgba(255,255,255,0.85),793px 286px rgba(255,255,255,0.85),379px 691px rgba(255,255,255,0.55),72px 534px rgba(255,255,255,0.35),571px 633px rgba(255,255,255,0.45),169px 232px rgba(255,255,255,0.25),381px 285px rgba(255,255,255,0.85),780px 270px rgba(255,255,255,0.45),245px 892px rgba(255,255,255,0.13),784px 713px rgba(255,255,255,0.85),1010px 355px rgba(255,255,255,0.25),840px 88px rgba(255,255,255,0.55),786px 630px rgba(255,255,255,0.25),518px 571px rgba(255,255,255,0.25),57px 147px rgba(255,255,255,0.45),760px 651px rgba(255,255,255,0.70),797px 365px rgba(255,255,255,0.35),1244px 634px rgba(255,255,255,0.35),1024px 236px rgba(255,255,255,0.25),1157px 539px rgba(255,255,255,0.85),918px 272px rgba(255,255,255,0.35),87px 524px rgba(255,255,255,0.25),68px 583px rgba(255,255,255,0.35),785px 222px rgba(255,255,255,0.55),892px 258px rgba(255,255,255,0.70),334px 412px rgba(255,255,255,0.45),105px 767px rgba(255,255,255,0.45),137px 873px rgba(255,255,255,0.08),332px 311px rgba(255,255,255,0.70),58px 66px rgba(255,255,255,0.35),780px 690px rgba(255,255,255,0.35),95px 116px rgba(255,255,255,0.35),700px 894px rgba(255,255,255,0.10),76px 850px rgba(255,255,255,0.27),470px 143px rgba(255,255,255,0.45),391px 212px rgba(255,255,255,0.55),894px 142px rgba(255,255,255,0.35),1069px 103px rgba(255,255,255,0.35),345px 100px rgba(255,255,255,0.70),769px 838px rgba(255,255,255,0.26),774px 181px rgba(255,255,255,0.70),1040px 792px rgba(255,255,255,0.20),11px 425px rgba(255,255,255,0.55),81px 342px rgba(255,255,255,0.70),396px 56px rgba(255,255,255,0.45),865px 37px rgba(255,255,255,0.70),803px 900px rgba(255,255,255,0.07),585px 582px rgba(255,255,255,0.85),328px 163px rgba(255,255,255,0.55),762px 847px rgba(255,255,255,0.34),83px 138px rgba(255,255,255,0.45),608px 319px rgba(255,255,255,0.45),203px 278px rgba(255,255,255,0.85),380px 779px rgba(255,255,255,0.85),699px 430px rgba(255,255,255,0.45),1141px 143px rgba(255,255,255,0.25),850px 786px rgba(255,255,255,0.85),1209px 398px rgba(255,255,255,0.70),1181px 720px rgba(255,255,255,0.70),479px 312px rgba(255,255,255,0.55),552px 699px rgba(255,255,255,0.70),531px 175px rgba(255,255,255,0.55),1155px 536px rgba(255,255,255,0.25),127px 162px rgba(255,255,255,0.55),1185px 671px rgba(255,255,255,0.45),661px 241px rgba(255,255,255,0.70),392px 426px rgba(255,255,255,0.45),61px 486px rgba(255,255,255,0.45),748px 219px rgba(255,255,255,0.70),1240px 738px rgba(255,255,255,0.35),538px 583px rgba(255,255,255,0.35),1140px 417px rgba(255,255,255,0.70),2px 375px rgba(255,255,255,0.25),4px 29px rgba(255,255,255,0.85),563px 364px rgba(255,255,255,0.55),55px 547px rgba(255,255,255,0.25),476px 469px rgba(255,255,255,0.55),948px 210px rgba(255,255,255,0.55),862px 716px rgba(255,255,255,0.45),1150px 353px rgba(255,255,255,0.55),640px 275px rgba(255,255,255,0.85),948px 787px rgba(255,255,255,0.70),1267px 729px rgba(255,255,255,0.35),415px 829px rgba(255,255,255,0.19),1226px 659px rgba(255,255,255,0.35),72px 729px rgba(255,255,255,0.55),375px 451px rgba(255,255,255,0.70),398px 776px rgba(255,255,255,0.70),734px 717px rgba(255,255,255,0.85),756px 87px rgba(255,255,255,0.25),284px 64px rgba(255,255,255,0.55),524px 720px rgba(255,255,255,0.85),1121px 289px rgba(255,255,255,0.55),762px 904px rgba(255,255,255,0.04),52px 86px rgba(255,255,255,0.55),206px 262px rgba(255,255,255,0.25),330px 628px rgba(255,255,255,0.25),1088px 192px rgba(255,255,255,0.45),190px 159px rgba(255,255,255,0.70),705px 745px rgba(255,255,255,0.25),760px 409px rgba(255,255,255,0.55),1192px 595px rgba(255,255,255,0.35),1105px 83px rgba(255,255,255,0.45),909px 321px rgba(255,255,255,0.45),868px 676px rgba(255,255,255,0.55),22px 244px rgba(255,255,255,0.55),539px 515px rgba(255,255,255,0.55)"></div>
<div class="abs" style="left:0;top:0;width:2px;height:2px;box-shadow:32px 43px 0 0 rgba(255,255,255,0.67),281px 78px 0 0 rgba(255,255,255,0.59),1109px 38px 0 0 rgba(255,255,255,0.83),607px 511px 0 0 rgba(255,255,255,0.63),467px 698px 0 0 rgba(255,255,255,0.67),138px 737px 0 0 rgba(255,255,255,0.83),1104px 100px 0 0 rgba(255,255,255,0.87),857px 472px 0 0 rgba(255,255,255,0.75),736px 554px 0 0 rgba(255,255,255,0.71),750px 418px 0 0 rgba(255,255,255,0.71),1033px 66px 0 0 rgba(255,255,255,0.91),1205px 172px 0 0 rgba(255,255,255,0.59),880px 420px 0 0 rgba(255,255,255,0.55),5px 470px 0 0 rgba(255,255,255,0.75),187px 178px 0 0 rgba(255,255,255,0.67),57px 163px 0 0 rgba(255,255,255,0.87),1215px 325px 0 0 rgba(255,255,255,0.55),990px 168px 0 0 rgba(255,255,255,0.71),593px 879px 0 0 rgba(255,255,255,0.87),171px 47px 0 0 rgba(255,255,255,0.87),1212px 344px 0 0 rgba(255,255,255,0.79),867px 418px 0 0 rgba(255,255,255,0.67),1085px 396px 0 0 rgba(255,255,255,0.67),266px 773px 0 0 rgba(255,255,255,0.59),393px 303px 0 0 rgba(255,255,255,0.55),910px 44px 0 0 rgba(255,255,255,0.63),452px 665px 0 0 rgba(255,255,255,0.91),931px 55px 0 0 rgba(255,255,255,0.63),216px 117px 0 0 rgba(255,255,255,0.67),1020px 461px 0 0 rgba(255,255,255,0.67),40px 554px 0 0 rgba(255,255,255,0.63),883px 397px 0 0 rgba(255,255,255,0.63),117px 240px 0 0 rgba(255,255,255,0.91),72px 633px 0 0 rgba(255,255,255,0.67),755px 703px 0 0 rgba(255,255,255,0.71),352px 665px 0 0 rgba(255,255,255,0.91),442px 782px 0 0 rgba(255,255,255,0.55),742px 609px 0 0 rgba(255,255,255,0.59),755px 615px 0 0 rgba(255,255,255,0.55),576px 706px 0 0 rgba(255,255,255,0.55),643px 616px 0 0 rgba(255,255,255,0.91),175px 863px 0 0 rgba(255,255,255,0.71),970px 211px 0 0 rgba(255,255,255,0.67),989px 634px 0 0 rgba(255,255,255,0.75),916px 721px 0 0 rgba(255,255,255,0.75),335px 216px 0 0 rgba(255,255,255,0.67),365px 576px 0 0 rgba(255,255,255,0.67),662px 719px 0 0 rgba(255,255,255,0.59),1065px 230px 0 0 rgba(255,255,255,0.75),1192px 147px 0 0 rgba(255,255,255,0.75),168px 130px 0 0 rgba(255,255,255,0.79),872px 69px 0 0 rgba(255,255,255,0.59),1163px 312px 0 0 rgba(255,255,255,0.83),1173px 317px 0 0 rgba(255,255,255,0.63),1208px 368px 0 0 rgba(255,255,255,0.55),223px 408px 0 0 rgba(255,255,255,0.75),590px 585px 0 0 rgba(255,255,255,0.75),624px 826px 0 0 rgba(255,255,255,0.79),931px 592px 0 0 rgba(255,255,255,0.67),447px 294px 0 0 rgba(255,255,255,0.59),306px 139px 0 0 rgba(255,255,255,0.91),1269px 832px 0 0 rgba(255,255,255,0.91),244px 754px 0 0 rgba(255,255,255,0.55),1009px 273px 0 0 rgba(255,255,255,0.63),672px 588px 0 0 rgba(255,255,255,0.87),291px 793px 0 0 rgba(255,255,255,0.79),1213px 132px 0 0 rgba(255,255,255,0.83),784px 201px 0 0 rgba(255,255,255,0.59),920px 64px 0 0 rgba(255,255,255,0.63),114px 675px 0 0 rgba(255,255,255,0.67),852px 432px 0 0 rgba(255,255,255,0.55),47px 196px 0 0 rgba(255,255,255,0.83),462px 733px 0 0 rgba(255,255,255,0.67),26px 257px 0 0 rgba(255,255,255,0.67),116px 581px 0 0 rgba(255,255,255,0.75),911px 796px 0 0 rgba(255,255,255,0.75),190px 384px 0 0 rgba(255,255,255,0.63),32px 837px 0 0 rgba(255,255,255,0.75),772px 532px 0 0 rgba(255,255,255,0.55),395px 67px 0 0 rgba(255,255,255,0.79),155px 300px 0 0 rgba(255,255,255,0.75),954px 591px 0 0 rgba(255,255,255,0.59),402px 803px 0 0 rgba(255,255,255,0.67),940px 332px 0 0 rgba(255,255,255,0.79),442px 123px 0 0 rgba(255,255,255,0.67),211px 599px 0 0 rgba(255,255,255,0.71),1083px 695px 0 0 rgba(255,255,255,0.79),347px 737px 0 0 rgba(255,255,255,0.55),1113px 601px 0 0 rgba(255,255,255,0.71),488px 289px 0 0 rgba(255,255,255,0.67),204px 461px 0 0 rgba(255,255,255,0.59),337px 42px 0 0 rgba(255,255,255,0.75),910px 810px 0 0 rgba(255,255,255,0.55),702px 702px 0 0 rgba(255,255,255,0.55),848px 863px 0 0 rgba(255,255,255,0.75),338px 661px 0 0 rgba(255,255,255,0.91),845px 101px 0 0 rgba(255,255,255,0.87),488px 588px 0 0 rgba(255,255,255,0.55),604px 465px 0 0 rgba(255,255,255,0.67),838px 336px 0 0 rgba(255,255,255,0.71),1140px 654px 0 0 rgba(255,255,255,0.63),1126px 82px 0 0 rgba(255,255,255,0.87),583px 141px 0 0 rgba(255,255,255,0.71),51px 676px 0 0 rgba(255,255,255,0.75),285px 370px 0 0 rgba(255,255,255,0.75),1145px 776px 0 0 rgba(255,255,255,0.67),881px 284px 0 0 rgba(255,255,255,0.91),338px 706px 0 0 rgba(255,255,255,0.71),160px 375px 0 0 rgba(255,255,255,0.75),1151px 735px 0 0 rgba(255,255,255,0.63),1109px 146px 0 0 rgba(255,255,255,0.59),481px 604px 0 0 rgba(255,255,255,0.91),964px 848px 0 0 rgba(255,255,255,0.63),920px 765px 0 0 rgba(255,255,255,0.75),557px 34px 0 0 rgba(255,255,255,0.59),692px 416px 0 0 rgba(255,255,255,0.63),48px 834px 0 0 rgba(255,255,255,0.87),290px 797px 0 0 rgba(255,255,255,0.59),822px 238px 0 0 rgba(255,255,255,0.87),61px 207px 0 0 rgba(255,255,255,0.87),920px 793px 0 0 rgba(255,255,255,0.91),865px 113px 0 0 rgba(255,255,255,0.71),860px 746px 0 0 rgba(255,255,255,0.87),567px 521px 0 0 rgba(255,255,255,0.63),1223px 735px 0 0 rgba(255,255,255,0.79),1104px 767px 0 0 rgba(255,255,255,0.91),1138px 211px 0 0 rgba(255,255,255,0.91),1077px 575px 0 0 rgba(255,255,255,0.71),609px 301px 0 0 rgba(255,255,255,0.79),176px 261px 0 0 rgba(255,255,255,0.75),127px 539px 0 0 rgba(255,255,255,0.79),772px 825px 0 0 rgba(255,255,255,0.91),36px 719px 0 0 rgba(255,255,255,0.91),935px 649px 0 0 rgba(255,255,255,0.63),843px 328px 0 0 rgba(255,255,255,0.75),654px 447px 0 0 rgba(255,255,255,0.91),715px 854px 0 0 rgba(255,255,255,0.83),618px 310px 0 0 rgba(255,255,255,0.79),698px 194px 0 0 rgba(255,255,255,0.87),793px 73px 0 0 rgba(255,255,255,0.55),859px 866px 0 0 rgba(255,255,255,0.59),978px 804px 0 0 rgba(255,255,255,0.87),1134px 291px 0 0 rgba(255,255,255,0.59),1103px 314px 0 0 rgba(255,255,255,0.67),182px 423px 0 0 rgba(255,255,255,0.67),444px 300px 0 0 rgba(255,255,255,0.87),299px 544px 0 0 rgba(255,255,255,0.75),759px 143px 0 0 rgba(255,255,255,0.63),1270px 503px 0 0 rgba(255,255,255,0.91),247px 314px 0 0 rgba(255,255,255,0.59),1159px 818px 0 0 rgba(255,255,255,0.83),905px 37px 0 0 rgba(255,255,255,0.79),75px 295px 0 0 rgba(255,255,255,0.55),227px 283px 0 0 rgba(255,255,255,0.87),1154px 679px 0 0 rgba(255,255,255,0.75),961px 73px 0 0 rgba(255,255,255,0.79),833px 856px 0 0 rgba(255,255,255,0.91),163px 312px 0 0 rgba(255,255,255,0.83),410px 400px 0 0 rgba(255,255,255,0.55),1157px 180px 0 0 rgba(255,255,255,0.91),1273px 828px 0 0 rgba(255,255,255,0.75),185px 214px 0 0 rgba(255,255,255,0.83),1042px 435px 0 0 rgba(255,255,255,0.91),1251px 725px 0 0 rgba(255,255,255,0.63),739px 330px 0 0 rgba(255,255,255,0.67),160px 669px 0 0 rgba(255,255,255,0.83),1239px 203px 0 0 rgba(255,255,255,0.63),83px 153px 0 0 rgba(255,255,255,0.55),373px 49px 0 0 rgba(255,255,255,0.87),278px 655px 0 0 rgba(255,255,255,0.59),284px 779px 0 0 rgba(255,255,255,0.75),603px 510px 0 0 rgba(255,255,255,0.59),604px 613px 0 0 rgba(255,255,255,0.83),97px 871px 0 0 rgba(255,255,255,0.63),88px 647px 0 0 rgba(255,255,255,0.83),1211px 134px 0 0 rgba(255,255,255,0.91),669px 60px 0 0 rgba(255,255,255,0.67),274px 388px 0 0 rgba(255,255,255,0.63),189px 193px 0 0 rgba(255,255,255,0.63),438px 241px 0 0 rgba(255,255,255,0.91),873px 354px 0 0 rgba(255,255,255,0.67),1269px 257px 0 0 rgba(255,255,255,0.71),1092px 631px 0 0 rgba(255,255,255,0.83),893px 709px 0 0 rgba(255,255,255,0.87),741px 574px 0 0 rgba(255,255,255,0.91),449px 792px 0 0 rgba(255,255,255,0.91),1148px 789px 0 0 rgba(255,255,255,0.67),638px 497px 0 0 rgba(255,255,255,0.83)"></div>
<svg class="ic" style="left:24px;top:32px" width="32" height="32" viewBox="0 0 32 32"><defs><linearGradient id="rb" x1="0" y1="0" x2="1" y2="1"><stop offset="0" stop-color="#eaf5fd"/><stop offset=".45" stop-color="#b4d8f2"/><stop offset="1" stop-color="#74b2e4"/></linearGradient></defs>
<path d="M0.500 6Q14 -1.500 30.500 .500L27 28Q17 33 7 29.500Z" fill="url(#rb)" opacity=".95"/><path d="M1 6.200Q15 10.500 30.200 1.500" stroke="#f6fcff" stroke-width="1.800" fill="none" opacity=".95"/><path d="M3 9.500L8.500 28.500" stroke="#fff" stroke-width="1.600" opacity=".55"/><path d="M27.500 8l-2.500 19" stroke="#5a9cd8" stroke-width="1.500" opacity=".5"/>
<path d="M12 14a6 6 0 0 1 9.800-.500l1.900-1.400.300 6.200-6-1.400 1.800-1.300a3.600 3.600 0 0 0-5.500.200z" fill="#28b428"/><path d="M23.500 20.500a6 6 0 0 1-9.800.500l-1.900 1.400-.300-6.200 6 1.400-1.800 1.300a3.600 3.600 0 0 0 5.500-.200z" fill="#28b428"/></svg>
<div class="abs" style="left:24.5px;top:69px;opacity:.85"><svg width="32" height="12" viewBox="0 -10.56 32 12" style="display:block;overflow:visible"><text x="0" y="0" font-size="12" fill="#000" textLength="32" lengthAdjust="spacingAndGlyphs">ごみ箱</text></svg></div>
<div class="abs" style="left:23.5px;top:68px"><svg width="32" height="12" viewBox="0 -10.56 32 12" style="display:block;overflow:visible"><text x="0" y="0" font-size="12" fill="#fff" textLength="32" lengthAdjust="spacingAndGlyphs">ごみ箱</text></svg></div>
<svg class="ic" style="left:104px;top:32px" width="32" height="32" viewBox="0 0 32 32"><path d="M2 4.5h4l1.2-1.5h4.3v2h2v7.5h-11.5z" fill="#e6dc6e" stroke="#8a8440" stroke-width=".6"/><path d="M5 15.5h7l2.5 2.5v11.5h-9.5z" fill="#fff" stroke="#555" stroke-width=".7"/><path d="M6.5 14h6.5l2 2" fill="none" stroke="#ddd" stroke-width="1"/>
<g fill="none" stroke="#f4f4f4" stroke-width="1.2"><path d="M17.5 29.5v-7h11.5v2.2h-9v2.4h6"/><path d="M17.5 19.8h11.5M23 19.8v-6.6M17.5 13.2h11.5" /><path d="M17.5 10.4v-7.8h6.5v5.2h-4M24 2.6h5"/></g><g><rect x="0.5" y="21.5" width="10" height="10" fill="#fff" stroke="#000" stroke-width="1"/><path d="M3 29.5q.2-4 4-4.6M4.6 23.4h4v4z" stroke="#000" stroke-width="1.3" fill="#000" stroke-linejoin="miter"/></g></svg>
<div class="lb" style="left:60px;top:68px"><span style="letter-spacing:-0.59px">CUTFTP32</span></div>
<svg class="ic" style="left:184px;top:32px" width="32" height="32" viewBox="0 0 32 32"><g fill="#1c7a1c" stroke="#0c4a0c" stroke-width=".6"><rect x="2.5" y="3" width="10.5" height="15.5" rx="1"/><rect x="18.5" y="3" width="10.5" height="15.5" rx="1"/><rect x="4" y="0.5" width="1.6" height="3"/><rect x="20" y="0.5" width="1.6" height="3"/></g><rect x="4.3" y="5" width="7" height="6" fill="#c4c8be"/><rect x="20.3" y="5" width="7" height="6" fill="#c4c8be"/><g fill="#0d520d"><rect x="4" y="13" width="3" height="1.6"/><rect x="8.6" y="13" width="3" height="1.6"/><rect x="20" y="13" width="3" height="1.6"/><rect x="24.6" y="13" width="3" height="1.6"/><rect x="4" y="16" width="7.6" height="1.4"/><rect x="20" y="16" width="7.6" height="1.4"/></g>
<path d="M12 29.5h11v-3" stroke="#8a8a8a" stroke-width="1.6" fill="none"/><path d="M18.5 22.5h11l-3.6 4.5h-3.8z" fill="#9a9a9a"/><g><rect x="0.5" y="21.5" width="10" height="10" fill="#fff" stroke="#000" stroke-width="1"/><path d="M3 29.5q.2-4 4-4.6M4.6 23.4h4v4z" stroke="#000" stroke-width="1.3" fill="#000" stroke-linejoin="miter"/></g></svg>
<div class="lb" style="left:140px;top:68px"><span style="letter-spacing:-0.33px">X-CTU</span></div>
<svg class="ic" style="left:24px;top:108px" width="32" height="32" viewBox="0 0 32 32"><path d="M3 7.5q0-1.5 1.5-1.5h6l2 2.2h9q1.5 0 1.5 1.5v13h-20z" fill="#e8c050" stroke="#b08820" stroke-width=".7"/><path d="M3 23.5l4-13h22.5l-5.5 13z" fill="#fbe596" stroke="#c8a040" stroke-width=".7"/>
<path d="M20 21l7 8" stroke="#e8a868" stroke-width="3.4" stroke-linecap="round"/><circle cx="13.5" cy="14" r="7.2" fill="#cfe9fb" stroke="#aeb8c4" stroke-width="1.8"/><circle cx="13.5" cy="14" r="5" fill="#b6ddf8"/><path d="M9.5 12a4.5 4.5 0 0 1 5-3" stroke="#fff" stroke-width="1.4" fill="none"/><g><rect x="0.5" y="21.5" width="10" height="10" fill="#fff" stroke="#000" stroke-width="1"/><path d="M3 29.5q.2-4 4-4.6M4.6 23.4h4v4z" stroke="#000" stroke-width="1.3" fill="#000" stroke-linejoin="miter"/></g></svg>
<div class="lb" style="left:-20px;top:144px"><span style="letter-spacing:-0.35px">explorer</span></div>
<svg class="ic" style="left:104px;top:108px" width="32" height="32" viewBox="0 0 32 32"><g fill="#c4c6d2"><rect x="3" y="7" width="3" height="21"/><rect x="26" y="7" width="3" height="21"/><rect x="8" y="1" width="2.4" height="6"/><rect x="21.6" y="1" width="2.4" height="6"/></g><g fill="#7c7e90"><rect x="6" y="7" width="1.2" height="21"/><rect x="24.8" y="7" width="1.2" height="21"/></g>
<path d="M9 9.5h4l1.2 1.6h8.3v10h-13.5z" fill="#f2e040" stroke="#a89820" stroke-width=".6"/><path d="M13.5 14h10.5v15h-8l-2.5-2.500z" fill="#fff" stroke="#333" stroke-width=".8"/><path d="M15.5 17h6.500M15.5 19.500h6.500M15.5 22h6.500M15.5 24.500h4" stroke="#222" stroke-width="1.1"/><g><rect x="0.5" y="21.5" width="10" height="10" fill="#fff" stroke="#000" stroke-width="1"/><path d="M3 29.5q.2-4 4-4.6M4.6 23.4h4v4z" stroke="#000" stroke-width="1.3" fill="#000" stroke-linejoin="miter"/></g></svg>
<div class="lb" style="left:60px;top:144px"><span style="letter-spacing:-0.62px">+Lhaca</span></div>
<svg class="ic" style="left:184px;top:108px" width="32" height="32" viewBox="0 0 32 32"><path d="M7.5 4.500l17.500-1.500 1 24-16.500 3z" fill="#f7f7f2" stroke="#9a9a9a" stroke-width=".8"/><path d="M25 3l1.700 1 .800 23.500-1.500-.500z" fill="#c4c4c4"/><path d="M7.500 4.600l17.500-1.600v2.600l-17.400 1.800z" fill="#c8a040"/><path d="M9 3.500v3M11.500 3.300v3M14 3v3M16.500 2.800v3M19 2.600v3M21.500 2.400v3M24 2.200v3" stroke="#7a5a18" stroke-width=".9"/>
<path d="M10 11.500l6-.600M10 14.500l10-.900M10.500 17.500l12-1M10.500 20.500l12-1M11 26l5-.500" stroke="#8c8c8c" stroke-width="1.100"/></svg>
<div class="lb" style="left:140px;top:144px"><span style="letter-spacing:-0.54px">memo.txt</span></div>
<svg class="ic" style="left:24px;top:184px" width="32" height="32" viewBox="0 0 32 32"><defs><radialGradient id="fg" cx=".5" cy=".3" r=".75"><stop offset="0" stop-color="#a8d8f8"/><stop offset=".45" stop-color="#3888e0"/><stop offset="1" stop-color="#10309a"/></radialGradient><linearGradient id="fo" x1="0" y1="0" x2=".3" y2="1"><stop offset="0" stop-color="#f08c20"/><stop offset=".45" stop-color="#e4501c"/><stop offset="1" stop-color="#f4a020"/></linearGradient></defs>
<circle cx="17.500" cy="14" r="12" fill="url(#fg)"/>
<path d="M6 4.500q1.500 1.200 3.500 1-1 2 0 3.500 1.500-.800 3.500-.500-2.500 1.500-2 4.500 1 3.500 4.500 4 4 .500 6.500-2l3.500 1.500q-1.500 5-7 6-5.500.800-9-3-1.500 1.500 0 5.500-5.500-3-6.500-9.500-.800-7 3-11z" fill="url(#fo)"/>
<path d="M29.800 8.500q2.200 6.500-1.200 12.500-4 6.800-12 7.500-7 .200-11-5.500 6 4 12.500 2 7-2.500 8.500-9.500.600-4-1.800-8 3.500 0 5 1z" fill="url(#fo)"/><path d="M3 10q-1.500 5 .500 9.500" stroke="#f8b030" stroke-width="1.200" fill="none"/><g><rect x="0.5" y="21.5" width="10" height="10" fill="#fff" stroke="#000" stroke-width="1"/><path d="M3 29.5q.2-4 4-4.6M4.6 23.4h4v4z" stroke="#000" stroke-width="1.3" fill="#000" stroke-linejoin="miter"/></g></svg>
<div class="lb" style="left:-20px;top:220px"><span style="letter-spacing:-0.22px">Mozilla Firefox</span></div>
<svg class="ic" style="left:104px;top:184px" width="32" height="32" viewBox="0 0 32 32"><defs><linearGradient id="wz" x1="0" y1="0" x2="0" y2="1"><stop offset="0" stop-color="#f8d048"/><stop offset="1" stop-color="#e89018"/></linearGradient></defs>
<g fill="#4878c0"><rect x="19" y="2" width="10" height="3" rx="1"/><rect x="22.500" y="3" width="3" height="24"/><rect x="16" y="26" width="15" height="4.500" rx="1"/><rect x="5" y="1" width="16" height="4" fill="#6890d0"/></g><g fill="#a8c4ec"><rect x="21" y="7" width="6" height="2.200"/><rect x="21" y="11" width="6" height="2.200"/><rect x="21" y="15" width="6" height="2.200"/><rect x="21" y="19" width="6" height="2.200"/><rect x="21" y="23" width="6" height="2"/></g>
<rect x="0.500" y="4.500" width="17" height="18" fill="url(#wz)" stroke="#a86810" stroke-width=".8"/><rect x="3" y="7.500" width="12" height="5.500" fill="#f4b838" stroke="#a86810" stroke-width=".7"/><rect x="3" y="14.500" width="12" height="5.500" fill="#f0a828" stroke="#a86810" stroke-width=".7"/><path d="M7 10.200h4M7 17.200h4" stroke="#7a4808" stroke-width="1.200"/><g><rect x="0.5" y="21.5" width="10" height="10" fill="#fff" stroke="#000" stroke-width="1"/><path d="M3 29.5q.2-4 4-4.6M4.6 23.4h4v4z" stroke="#000" stroke-width="1.3" fill="#000" stroke-linejoin="miter"/></g></svg>
<div class="lb" style="left:60px;top:220px"><span style="letter-spacing:-0.56px">WinZip</span></div>
<svg class="ic" style="left:24px;top:260px" width="32" height="32" viewBox="0 0 32 32"><rect x="2.500" y="1" width="24" height="29" fill="#c8f0f4" stroke="#4aa0a8" stroke-width=".8"/><path d="M5 4h19M5 7h19M5 10h19M5 13h19M5 16h19M5 19h19M5 22h19M5 25h19M5 28h19" stroke="#58b0c0" stroke-width="1"/>
<path d="M1 11q6-5 12-2 5-6 10-1 6 1 7 7-2 6-8 5 1 6-5 9-5 1-7-6-8 1-9-6z" fill="#1030c8"/>
<path d="M8 9.500q7-1 13-4M14.500 4v15M5 14.500q10-1 21-3.500M14 12.500q-3 6-9 8M15 12.500q3 4 10 5M10 21h9q1 4-3 5-1 3-6 4M12 25h6" stroke="#f8ec30" stroke-width="2.200" fill="none" stroke-linecap="round"/><g><rect x="0.5" y="21.5" width="10" height="10" fill="#fff" stroke="#000" stroke-width="1"/><path d="M3 29.5q.2-4 4-4.6M4.6 23.4h4v4z" stroke="#000" stroke-width="1.3" fill="#000" stroke-linejoin="miter"/></g></svg>
<div class="lb" style="left:-20px;top:296px"><span style="letter-spacing:-0.70px">HIDEMARU</span></div>
<svg class="ic" style="left:104px;top:260px" width="32" height="32" viewBox="0 0 32 32"><path d="M1 8l4-5h22l4 5z" fill="#8a5aa8"/><path d="M5 3h22l3.500 4.500h-29z" fill="#c080c8"/><rect x="0.500" y="8" width="31" height="7" rx="1" fill="#a04898"/><rect x="1" y="9" width="6" height="5" fill="#e8e4e0"/>
<rect x="0.500" y="15" width="31" height="6.500" rx="1" fill="#2848c8"/><rect x="1" y="16" width="6" height="4.500" fill="#e0e0e8"/><rect x="0.500" y="21.500" width="31" height="7" rx="1" fill="#208820"/><rect x="1" y="22.500" width="6" height="5" fill="#dde8dd"/>
<path d="M10 3l7 5" stroke="#b87830" stroke-width="3"/><rect x="17.500" y="7" width="3.600" height="22" fill="#b87030"/><rect x="16.600" y="12" width="5.400" height="6" fill="none" stroke="#e8e0c0" stroke-width="1.200"/><g><rect x="0.5" y="21.5" width="10" height="10" fill="#fff" stroke="#000" stroke-width="1"/><path d="M3 29.5q.2-4 4-4.6M4.6 23.4h4v4z" stroke="#000" stroke-width="1.3" fill="#000" stroke-linejoin="miter"/></g></svg>
<div class="lb" style="left:60px;top:296px"><span style="letter-spacing:-0.50px">WinRAR</span></div>
<svg class="ic" style="left:24px;top:336px" width="32" height="32" viewBox="0 0 32 32"><circle cx="16" cy="16" r="15.500" fill="#4a352e"/><path d="M13.500 6.500h9.500v3.200h-6.300l-.500 3.800q1.500-.900 3.300-.900 2.400 0 3.800 1.700 1.300 1.600 1.300 4 0 2.900-1.900 4.600-1.800 1.600-4.500 1.600-2.400 0-4-1.200-1.700-1.300-1.900-3.500l3.500-.300q.200 1.100.800 1.700.700.600 1.600.600 1.200 0 1.900-.900.700-.900.700-2.500 0-1.500-.700-2.300-.700-.800-1.900-.800-1.500 0-2.400 1.300l-3.100-.400z" fill="#fff"/><g><rect x="0.5" y="21.5" width="10" height="10" fill="#fff" stroke="#000" stroke-width="1"/><path d="M3 29.5q.2-4 4-4.6M4.6 23.4h4v4z" stroke="#000" stroke-width="1.3" fill="#000" stroke-linejoin="miter"/></g></svg>
<div class="lb" style="left:-20px;top:372px"><span style="letter-spacing:-0.89px">Max 5.1</span></div>
<svg class="ic" style="left:104px;top:336px" width="32" height="32" viewBox="0 0 32 32"><rect x="0" y="0" width="32" height="32" fill="#f01414"/><rect x="11.500" y="0" width="8" height="32" fill="#fff"/><rect x="0" y="13" width="32" height="7.500" fill="#fff"/><rect x="13.500" y="0" width="4" height="32" fill="#101088"/><rect x="0" y="15" width="32" height="3.600" fill="#101088"/><g><rect x="0.5" y="21.5" width="10" height="10" fill="#fff" stroke="#000" stroke-width="1"/><path d="M3 29.5q.2-4 4-4.6M4.6 23.4h4v4z" stroke="#000" stroke-width="1.3" fill="#000" stroke-linejoin="miter"/></g></svg>
<div class="lb" style="left:60px;top:372px"><span style="letter-spacing:-0.91px">MPG2JPG</span></div>
<svg class="ic" style="left:24px;top:412px" width="32" height="32" viewBox="0 0 32 32"><defs><linearGradient id="pg" x1="0" y1="0" x2="1" y2="1"><stop offset="0" stop-color="#584838"/><stop offset=".6" stop-color="#6c5a48"/><stop offset="1" stop-color="#8a7a68"/></linearGradient></defs><rect x="0.500" y="0.500" width="31" height="31" rx="3" fill="url(#pg)" stroke="#3a3028" stroke-width=".8"/>
<path d="M24 3q-2 12-8 26M28 8q-4 12-14 22M30 18l-10 13" stroke="#a89c8c" stroke-width=".8" fill="none"/>
<circle cx="6.500" cy="7" r="2.600" fill="none" stroke="#fff" stroke-width="1.300"/><circle cx="6.500" cy="15" r="2.600" fill="none" stroke="#fff" stroke-width="1.300"/><circle cx="6.500" cy="15" r=".800" fill="#fff"/><path d="M6 6l1.600 1-1.600 1z" fill="#fff"/><path d="M12.500 18v-13h4q3.500.200 3.500 3.800 0 3.600-3.500 3.800h-4" fill="none" stroke="#fff" stroke-width="1.500"/><g><rect x="0.5" y="21.5" width="10" height="10" fill="#fff" stroke="#000" stroke-width="1"/><path d="M3 29.5q.2-4 4-4.6M4.6 23.4h4v4z" stroke="#000" stroke-width="1.3" fill="#000" stroke-linejoin="miter"/></g></svg>
<div class="lb" style="left:-20px;top:448px"><span style="letter-spacing:-0.41px">Processing</span></div>
<svg class="ic" style="left:104px;top:412px" width="32" height="32" viewBox="0 0 32 32"><path d="M3 9l12-7 10 5v14l-12 9-10-6z" fill="#1828c0"/><path d="M3 9l12-7 10 5-12 7z" fill="#3040e0"/><path d="M13 14l12-7v14l-12 9z" fill="#101890"/><path d="M7 9.500l9-4.500M9 11l9-4.500" stroke="#7888f0" stroke-width="1.200"/>
<text x="-.500" y="23.500" font-family="Liberation Sans,sans-serif" font-weight="bold" font-style="italic" font-size="16.500" fill="#f4f020" letter-spacing="-.5">TeX</text><g><rect x="0.5" y="21.5" width="10" height="10" fill="#fff" stroke="#000" stroke-width="1"/><path d="M3 29.5q.2-4 4-4.6M4.6 23.4h4v4z" stroke="#000" stroke-width="1.3" fill="#000" stroke-linejoin="miter"/></g></svg>
<div class="lb" style="left:60px;top:448px"><span style="letter-spacing:-0.55px">WinShell</span></div>
<svg class="ic" style="left:24px;top:488px" width="32" height="32" viewBox="0 0 32 32"><path d="M1 5.500q7-2 14 .200 8-2.400 16-.700l-.200 2.500q-8-.600-15.800.800-7-1.800-14-.300z" fill="#d83030"/><rect x="14.800" y="6" width="1.600" height="5" fill="#38a0a0"/>
<path d="M5 23q0-13 11-13 11 0 11 13z" fill="#f4d820"/><path d="M5 23q0-11 6-12.500-2.500 5-2.500 12.500z" fill="#38a8e0"/><path d="M27 23q0-11-6-12.500 2.500 5 2.500 12.500z" fill="#40b8d8"/><path d="M12.500 23q0-9 3.500-13 3.500 4 3.500 13z" fill="#f0a020"/>
<path d="M4 23q12-3.500 27 1.500-2 3.500-13 3.500-12-.500-14-5z" fill="#f0e030"/><path d="M4 23q12-3.500 27 1.500" stroke="#40a840" stroke-width="1.500" fill="none"/><g><rect x="0.5" y="21.5" width="10" height="10" fill="#fff" stroke="#000" stroke-width="1"/><path d="M3 29.5q.2-4 4-4.6M4.6 23.4h4v4z" stroke="#000" stroke-width="1.3" fill="#000" stroke-linejoin="miter"/></g></svg>
<div class="lb" style="left:-20px;top:524px"><span style="letter-spacing:-0.16px">Propeller Tool</span><span style="letter-spacing:-0.67px">v1.06</span></div>
<svg class="ic" style="left:104px;top:488px" width="32" height="32" viewBox="0 0 32 32"><rect x="0.500" y="0.500" width="31" height="31" fill="#c4c4c4" stroke="#000" stroke-width="1"/><path d="M1 1h30v10l-20 20h-10z" fill="#fff"/><path d="M1 1l14 14-3 3-11-11zM12 1l12 12-2.500 2.500-13.500-13.500zM21 1l8 8-2 2-9.500-9.500z" fill="#000"/><path d="M1 14l10 10M6 1l14 14M17 1l11 11M27 1l4 4" stroke="#222" stroke-width=".8"/><path d="M31 11l-20 20" stroke="#555" stroke-width=".8"/>
<ellipse cx="22.500" cy="26" rx="3.600" ry="3" fill="#e01010"/><path d="M25.300 26v-14q2 2 4.500 1.500M25.300 12q-3.500-1-5.500 1.500" stroke="#e01010" stroke-width="2" fill="none"/><g><rect x="0.5" y="21.5" width="10" height="10" fill="#fff" stroke="#000" stroke-width="1"/><path d="M3 29.5q.2-4 4-4.6M4.6 23.4h4v4z" stroke="#000" stroke-width="1.3" fill="#000" stroke-linejoin="miter"/></g></svg>
<div class="lb" style="left:60px;top:524px"><span style="letter-spacing:-0.60px">STUDIO3</span></div>
<svg class="ic" style="left:24px;top:564px" width="32" height="32" viewBox="0 0 32 32"><rect x="0.500" y="0.500" width="31" height="31" fill="#080808" stroke="#222" stroke-width="1"/><path d="M2 3h27M2 6h26M2 9h12M2 12h10M2 15h8M2 18h8M2 21h8M4 1v26M7 1v26M10 1v14M13 1v10M16 1v8M19 1v6M22 1v5M25 1v5" stroke="#8a7868" stroke-width=".6"/>
<defs><pattern id="vd" width="2" height="2" patternUnits="userSpaceOnUse"><rect width="1" height="1" fill="#fff"/><rect x="1" y="1" width="1" height="1" fill="#fff"/></pattern></defs><path d="M11 31q-3-12 6-20 5-4 10-3 1 10-1 23z" fill="url(#vd)"/><path d="M27 8q3 1 4 4v19h-5q2-12 1-23z" fill="#000"/><path d="M9 22q2-10 12-15" stroke="#bbb" stroke-width=".8" fill="none"/><rect x="26" y="1.500" width="4" height="4" fill="#ccc"/><g><rect x="0.5" y="21.5" width="10" height="10" fill="#fff" stroke="#000" stroke-width="1"/><path d="M3 29.5q.2-4 4-4.6M4.6 23.4h4v4z" stroke="#000" stroke-width="1.3" fill="#000" stroke-linejoin="miter"/></g></svg>
<div class="lb" style="left:-20px;top:600px"><span style="letter-spacing:-0.69px">VOCALOID2</span><span style="letter-spacing:-0.28px">Editor</span></div>
<svg class="ic" style="left:104px;top:564px" width="32" height="32" viewBox="0 0 32 32"><rect x="0" y="0" width="32" height="32" fill="#6c7078"/><rect x="0" y="30.500" width="32" height="1.500" fill="#384048"/><circle cx="16" cy="16" r="13" fill="#585e70" stroke="#a8a890" stroke-width="1.600"/><circle cx="16" cy="16" r="10" fill="#40508c" stroke="#7a7e88" stroke-width="1.200"/><circle cx="15" cy="14" r="6" fill="#5a70b8"/><path d="M13 20v-9l7-2v8" stroke="#c8cc50" stroke-width="2.200" fill="none" opacity=".9"/><circle cx="11.500" cy="20" r="2" fill="#b8c048"/><circle cx="18.500" cy="17.500" r="2" fill="#b8c048"/><g><rect x="0.5" y="21.5" width="10" height="10" fill="#fff" stroke="#000" stroke-width="1"/><path d="M3 29.5q.2-4 4-4.6M4.6 23.4h4v4z" stroke="#000" stroke-width="1.3" fill="#000" stroke-linejoin="miter"/></g></svg>
<div class="lb" style="left:60px;top:600px"><span style="letter-spacing:-0.68px">musique</span></div>
<svg class="ic" style="left:24px;top:640px" width="32" height="32" viewBox="0 0 32 32"><rect x="2" y="4" width="28" height="23" fill="#060606" stroke="#303848" stroke-width="1"/><rect x="2" y="4" width="28" height="3.500" fill="#2c68c8"/><rect x="22" y="4.800" width="2" height="2" fill="#9cc0f0"/><rect x="25" y="4.800" width="2" height="2" fill="#9cc0f0"/>
<text x="4" y="20" font-family="Liberation Sans,sans-serif" font-weight="bold" font-size="9.500" fill="#fff">C:\</text><rect x="19" y="19.500" width="6.500" height="1.500" fill="#fff"/><g><rect x="0.5" y="21.5" width="10" height="10" fill="#fff" stroke="#000" stroke-width="1"/><path d="M3 29.5q.2-4 4-4.6M4.6 23.4h4v4z" stroke="#000" stroke-width="1.3" fill="#000" stroke-linejoin="miter"/></g></svg>
<div class="lb" style="left:-20px;top:676px"><span style="letter-spacing:-1.00px">DOS</span></div>
<svg class="ic" style="left:104px;top:640px" width="32" height="32" viewBox="0 0 32 32"><defs><linearGradient id="ms" x1="0" y1="0" x2="1" y2="1"><stop offset="0" stop-color="#8a8a8a"/><stop offset=".5" stop-color="#e4e4e4"/><stop offset="1" stop-color="#7c7c7c"/></linearGradient></defs><rect x="0" y="0" width="32" height="32" fill="url(#ms)"/><rect x="0" y="0" width="32" height="3" fill="#1010a8"/><rect x="0" y="29.500" width="32" height="2.500" fill="#1010a8"/><rect x="0" y="0" width="32" height="1" fill="#000"/>
<text x="16" y="20.500" text-anchor="middle" font-family="Liberation Sans,sans-serif" font-weight="bold" font-size="12.500" fill="#fff" stroke="#000" stroke-width="2.400" paint-order="stroke" letter-spacing="-.3">MSS</text><g><rect x="0.5" y="21.5" width="10" height="10" fill="#fff" stroke="#000" stroke-width="1"/><path d="M3 29.5q.2-4 4-4.6M4.6 23.4h4v4z" stroke="#000" stroke-width="1.3" fill="#000" stroke-linejoin="miter"/></g></svg>
<div class="lb" style="left:60px;top:676px"><span style="letter-spacing:-0.34px">Music Studio</span><span style="letter-spacing:-0.57px">Independence</span></div>
<svg class="ic" style="left:24px;top:716px" width="32" height="32" viewBox="0 0 32 32"><defs><linearGradient id="qt" x1="0" y1="0" x2="0" y2="1"><stop offset="0" stop-color="#58b8f8"/><stop offset="1" stop-color="#1878d8"/></linearGradient></defs><circle cx="16" cy="15" r="10.500" fill="none" stroke="url(#qt)" stroke-width="5"/><path d="M20 22l7 7.500" stroke="#2088e0" stroke-width="4.500" stroke-linecap="round"/><circle cx="16" cy="15" r="8" fill="#0c60b8" opacity=".55"/><path d="M14.500 16.500l7-7" stroke="#d0e8fc" stroke-width="2" stroke-linecap="round"/><g><rect x="0.5" y="21.5" width="10" height="10" fill="#fff" stroke="#000" stroke-width="1"/><path d="M3 29.5q.2-4 4-4.6M4.6 23.4h4v4z" stroke="#000" stroke-width="1.3" fill="#000" stroke-linejoin="miter"/></g></svg>
<div class="lb" style="left:-20px;top:752px"><span style="letter-spacing:-0.30px">QuickTime</span><span style="letter-spacing:-0.54px">Player</span></div>
<svg class="ic" style="left:104px;top:716px" width="32" height="32" viewBox="0 0 32 32"><defs><linearGradient id="dm" x1="0" y1="0" x2="1" y2="1"><stop offset="0" stop-color="#e8f4ff"/><stop offset=".35" stop-color="#88b4f0"/><stop offset=".7" stop-color="#1c3cb0"/><stop offset="1" stop-color="#0c1c78"/></linearGradient><radialGradient id="dr" cx=".4" cy=".55" r=".5"><stop offset="0" stop-color="#fff"/><stop offset=".4" stop-color="#fff" stop-opacity=".7"/><stop offset="1" stop-color="#fff" stop-opacity="0"/></radialGradient></defs>
<rect x="0.500" y="0.500" width="31" height="31" fill="url(#dm)" stroke="#0a1040" stroke-width="1"/><rect x="1" y="1" width="30" height="30" fill="url(#dr)"/><path d="M13 18l16-14M13 18l17 4M13 18l6 13M13 18l-12 2" stroke="#fff" stroke-width="1" opacity=".55"/>
<ellipse cx="6" cy="12" rx="3" ry="2.300" fill="#5c98e8"/><path d="M8.600 12v-9q3 1 4.500 4.500" stroke="#5c98e8" stroke-width="1.500" fill="none"/><g><rect x="0.5" y="21.5" width="10" height="10" fill="#fff" stroke="#000" stroke-width="1"/><path d="M3 29.5q.2-4 4-4.6M4.6 23.4h4v4z" stroke="#000" stroke-width="1.3" fill="#000" stroke-linejoin="miter"/></g></svg>
<div class="lb" style="left:60px;top:752px"><span style="letter-spacing:-0.68px">Domino</span></div>
<svg class="ic" style="left:24px;top:792px" width="32" height="32" viewBox="0 0 32 32"><path d="M7 27h22l2 4h-26z" fill="#f07c10"/><path d="M15.500 2h3l7.500 25h-18z" fill="#f88818"/><path d="M14.300 7h5.400l1.500 5h-8.400z" fill="#f4f0ec"/><path d="M11.600 16h10.800l1.500 5h-13.800z" fill="#f4f0ec"/><path d="M18.500 2l7.500 25h-4z" fill="#d86808" opacity=".5"/><ellipse cx="17" cy="27" rx="9" ry="1.800" fill="#d06008"/><g><rect x="0.5" y="21.5" width="10" height="10" fill="#fff" stroke="#000" stroke-width="1"/><path d="M3 29.5q.2-4 4-4.6M4.6 23.4h4v4z" stroke="#000" stroke-width="1.3" fill="#000" stroke-linejoin="miter"/></g></svg>
<div class="lb" style="left:-20px;top:828px"><span style="letter-spacing:-0.35px">VLC media</span><span style="letter-spacing:-0.20px">player</span></div>
<svg class="ic" style="left:104px;top:792px" width="32" height="32" viewBox="0 0 32 32"><rect x="0.500" y="0.500" width="30" height="31" rx="5" fill="#fff" stroke="#0c2c58" stroke-width="1"/><path d="M3.500 11.500v-4l3 1.500 3-2 2 2.500 2.500-1" fill="none" stroke="#d050a0" stroke-width="1.600"/><path d="M12 9l3-3.500 2.500-3 3.500 1.500 3.500-1.500 3 2 .500 4-1.500 4" fill="none" stroke="#2840d0" stroke-width="1.700"/><path d="M19 2.500l3 1.500" stroke="#2840d0" stroke-width="2.500"/>
<text x="15" y="17" text-anchor="middle" font-family="Liberation Sans,sans-serif" font-weight="bold" font-style="italic" font-size="5.500" fill="#182858" stroke="#182858" stroke-width=".5">ScanSnap</text><text x="14.500" y="22.500" text-anchor="middle" font-family="Liberation Sans,sans-serif" font-weight="bold" font-style="italic" font-size="5.500" fill="#182858" stroke="#182858" stroke-width=".5">Organizer</text>
<path d="M17.500 23.500q1 3.500 .500 7M24 23.500q0 3.500-1.500 7" stroke="#d870b0" stroke-width="1.300" fill="none"/><path d="M21 23.500q.500 3.500 0 7" stroke="#4060d8" stroke-width="1.300" fill="none"/><g><rect x="0.5" y="21.5" width="10" height="10" fill="#fff" stroke="#000" stroke-width="1"/><path d="M3 29.5q.2-4 4-4.6M4.6 23.4h4v4z" stroke="#000" stroke-width="1.3" fill="#000" stroke-linejoin="miter"/></g></svg>
<div class="lb" style="left:60px;top:828px"><span style="letter-spacing:-0.62px">ScanSnap</span><span style="letter-spacing:-0.52px">Organizer</span></div>
<svg class="ic" style="left:24px;top:868px" width="32" height="32" viewBox="0 0 32 32"><defs><radialGradient id="wm" cx=".4" cy=".35" r=".7"><stop offset="0" stop-color="#fff"/><stop offset=".6" stop-color="#dce8f8"/><stop offset="1" stop-color="#9ab4dc"/></radialGradient></defs><circle cx="16" cy="16" r="14.500" fill="#e8e8e8"/><path d="M16 1.500a14.500 14.500 0 0 1 14.500 14.500h-4a10.500 10.500 0 0 0-10.500-10.500z" fill="#38a838"/><path d="M30.500 16a14.500 14.500 0 0 1-14.500 14.500v-4a10.500 10.500 0 0 0 10.500-10.500z" fill="#e8b020"/><path d="M16 30.500a14.500 14.500 0 0 1-14.500-14.500h4a10.500 10.500 0 0 0 10.500 10.500z" fill="#4878d0"/><path d="M1.500 16a14.500 14.500 0 0 1 14.500-14.500v4a10.500 10.500 0 0 0-10.500 10.500z" fill="#e86030"/>
<circle cx="16" cy="16" r="10.800" fill="url(#wm)"/><circle cx="16" cy="16" r="7.500" fill="#c4d8f4"/><path d="M12.500 10.500l9.500 5.500-9.500 5.500z" fill="#1838b0"/><g><rect x="0.5" y="21.5" width="10" height="10" fill="#fff" stroke="#000" stroke-width="1"/><path d="M3 29.5q.2-4 4-4.6M4.6 23.4h4v4z" stroke="#000" stroke-width="1.3" fill="#000" stroke-linejoin="miter"/></g></svg>
<div class="lb" style="left:-20px;top:904px"><span style="letter-spacing:-0.64px">Windows</span><span style="letter-spacing:-0.39px">Media Player</span></div>
<svg class="ic" style="left:104px;top:868px" width="32" height="32" viewBox="0 0 32 32"><rect x="0" y="0" width="16" height="32" fill="#008a10"/><rect x="16" y="0" width="16" height="32" fill="#008888"/><text x="16.500" y="23.500" text-anchor="middle" font-family="Liberation Sans,sans-serif" font-weight="bold" font-size="19" fill="#fff" letter-spacing="-.5">ED</text><g><rect x="0.5" y="21.5" width="10" height="10" fill="#fff" stroke="#000" stroke-width="1"/><path d="M3 29.5q.2-4 4-4.6M4.6 23.4h4v4z" stroke="#000" stroke-width="1.3" fill="#000" stroke-linejoin="miter"/></g></svg>
<div class="lb" style="left:60px;top:904px"><span style="letter-spacing:-1.78px">E_D</span></div>
<svg class="ic" style="left:24px;top:944px" width="32" height="32" viewBox="0 0 32 32"><defs><linearGradient id="fl" x1="0" y1="0" x2="0" y2="1"><stop offset="0" stop-color="#2888e0"/><stop offset="1" stop-color="#0c60b8"/></linearGradient></defs><rect x="1" y="1" width="30" height="30" rx="6" fill="url(#fl)" stroke="#0c3c78" stroke-width="1.500"/>
<g fill="#e8f4ff" transform="rotate(-35 16 16)"><rect x="3" y="8" width="5.500" height="4.500" rx="1"/><rect x="10" y="8" width="5.500" height="4.500" rx="1"/><rect x="17" y="8" width="5.500" height="4.500" rx="1"/><rect x="24" y="8" width="5.500" height="4.500" rx="1"/><rect x="1" y="14" width="5.500" height="4.500" rx="1"/><rect x="8" y="14" width="5.500" height="4.500" rx="1"/><rect x="15" y="14" width="5.500" height="4.500" rx="1"/><rect x="22" y="14" width="5.500" height="4.500" rx="1"/><rect x="3" y="20" width="5.500" height="4.500" rx="1"/><rect x="10" y="20" width="5.500" height="4.500" rx="1"/><rect x="17" y="20" width="5.500" height="4.500" rx="1"/></g><g><rect x="0.5" y="21.5" width="10" height="10" fill="#fff" stroke="#000" stroke-width="1"/><path d="M3 29.5q.2-4 4-4.6M4.6 23.4h4v4z" stroke="#000" stroke-width="1.3" fill="#000" stroke-linejoin="miter"/></g></svg>
<div class="lb" style="left:-20px;top:980px"><span style="letter-spacing:-0.27px">FLV Player</span></div>
<svg class="ic" style="left:104px;top:944px" width="32" height="32" viewBox="0 0 32 32"><defs><linearGradient id="ac" x1="0" y1="0" x2="0" y2="1"><stop offset="0" stop-color="#fdfdfd"/><stop offset=".8" stop-color="#f4f0ee"/><stop offset="1" stop-color="#d8d4d0"/></linearGradient></defs><rect x="2" y="1" width="28" height="26.500" fill="url(#ac)" stroke="#c8c4c0" stroke-width=".6"/>
<path d="M13 22.500q5-6 3.500-15-.500-3-2-2.500-1 1 .200 5 2 7 9 9.500 4 1 4.500-.500.200-1.500-4-1.500-6 0-12.500 4.500-1.500 1.200-.700 2z" fill="none" stroke="#e01828" stroke-width="1.500"/><g><rect x="0.5" y="21.5" width="10" height="10" fill="#fff" stroke="#000" stroke-width="1"/><path d="M3 29.5q.2-4 4-4.6M4.6 23.4h4v4z" stroke="#000" stroke-width="1.3" fill="#000" stroke-linejoin="miter"/></g></svg>
<div class="lb" style="left:60px;top:980px"><span style="letter-spacing:-0.26px">Adobe Acrobat</span><span style="letter-spacing:-0.33px">8 Standard</span></div>
<div class="abs" style="left:0;top:0;width:1280px;height:28px;background:#d4d0c8;box-shadow:inset 0 -1px #8c8a84,inset 0 -2px #f2f0ea"></div>
<div class="btn" style="left:2px;top:2px;width:61px;height:22px"></div>
<svg class="abs" style="left:5px;top:5px" width="16" height="16" viewBox="0 0 16 16"><path d="M2 3.5Q4.5 1.5 7.5 3L6.6 7.4Q4 6 1.2 7.8Z" fill="#e8432b"/><path d="M8.6 3.3Q11.5 4.8 14.6 2.8L13.7 7.2Q10.8 9 7.7 7.6Z" fill="#5db332"/><path d="M1 8.8Q3.8 7 6.4 8.4L5.500 12.800Q2.800 11.400 0.200 13.200Z" fill="#3a78d8"/><path d="M7.5 8.6Q10.600 10 13.500 8.200L12.600 12.600Q9.600 14.400 6.600 13Z" fill="#f4c118"/></svg>
<div class="abs" style="left:22px;top:7px"><svg width="38" height="12" viewBox="0 -10.56 38 12" style="display:block;overflow:visible"><text x="0" y="0" font-size="12" font-weight="bold" fill="#000" textLength="38" lengthAdjust="spacingAndGlyphs">スタート</text></svg></div>
<div class="tk" style="left:69px"></div>
<svg class="abs" style="left:73px;top:5px" width="16" height="16" viewBox="0 0 16 16"><path d="M2.5 .5h8l3 3v12h-11z" fill="#fff" stroke="#222" stroke-width="1"/><path d="M10.5 .5v3h3" fill="#ddd" stroke="#222" stroke-width="1"/><rect x="1" y="3" width="7" height="7" fill="#1020a0"/><path d="M2 8l2-4 1.5 3 1-2 1 3" stroke="#ffe640" stroke-width="1" fill="none"/></svg>
<div class="abs" style="left:92px;top:7px"><svg width="130" height="12" viewBox="0 -10.56 130 12" style="display:block;overflow:visible"><text x="0.500" y="0" font-size="12" fill="#000" textLength="129" lengthAdjust="spacingAndGlyphs">C:¥...¥デスクトップ¥memo.t...</text></svg></div>
<div class="tk" style="left:232px;background:#eceae6;box-shadow:inset -1px -1px #fff,inset 1px 1px #404040,inset -2px -2px #d4d0c8,inset 2px 2px #808080"></div>
<svg class="abs" style="left:237px;top:6px" width="17" height="16" viewBox="0 0 17 16"><g fill="#1c3a1c"><rect x="0" y="0" width="7" height="11"/><rect x="9" y="0" width="7" height="11"/><rect x="1" y="12" width="5" height="1"/><rect x="10" y="12" width="5" height="1"/><rect x="3" y="13" width="1" height="2"/><rect x="12" y="13" width="1" height="2"/></g><rect x="1.5" y="2" width="4" height="5" fill="#9be08a"/><rect x="10.5" y="2" width="4" height="5" fill="#9be08a"/><rect x="1" y="8" width="5" height="2" fill="#3c9a34"/><rect x="10" y="8" width="5" height="2" fill="#3c9a34"/></svg>
<div class="t" style="left:258px;top:3px;font-weight:bold;font-size:13px;line-height:22px;letter-spacing:0">[COM9] X-CTU</div>
<div class="tk" style="left:395px"></div>
<svg class="abs" style="left:399px;top:5px" width="16" height="16" viewBox="0 0 16 16"><path d="M3 5h10l-1.500 10h-7z" fill="#c8c4b8" stroke="#777" stroke-width=".8"/><path d="M5 1l1.500 9" stroke="#d03020" stroke-width="1.600"/><path d="M8 0.500v10" stroke="#e0b020" stroke-width="1.600"/><path d="M11 1l-1.500 9" stroke="#30a040" stroke-width="1.600"/><path d="M3.500 2.500l2.500 8" stroke="#7040c0" stroke-width="1.200"/><path d="M3.600 8h8.800l-1 7h-6.800z" fill="#d8d4c8" stroke="#777" stroke-width=".6"/></svg>
<div class="t" style="left:418px;top:2px;line-height:22px;font-size:12px;letter-spacing:-.1px">win02.JPG -</div>
<div class="abs" style="left:485px;top:7px"><svg width="38" height="12" viewBox="0 -10.56 38 12" style="display:block;overflow:visible"><text x="0" y="0" font-size="12" fill="#000" textLength="37.500" lengthAdjust="spacingAndGlyphs">ペイント</text></svg></div>
<div class="tk" style="left:558px"></div>
<svg class="abs" style="left:561px;top:5px" width="17" height="16" viewBox="0 0 17 16"><path d="M1 3.500q0-1.200 1.200-1.200h4l1.500 1.600h6.600q1.200 0 1.200 1.200v7.600q0 1.200-1.200 1.200h-12.100q-1.200 0-1.200-1.200z" fill="#f0c84c" stroke="#a07818" stroke-width=".9"/><path d="M2 13.500l2.200-7h12l-2.400 7z" fill="#ffe48a" stroke="#a07818" stroke-width=".8"/><ellipse cx="9" cy="8" rx="3.400" ry="3" fill="#dfe8f4" opacity=".85"/></svg>
<div class="t" style="left:582px;top:2px;line-height:22px;font-size:12px;letter-spacing:-.1px">WORK1 (F:)</div>
<div class="abs" style="left:1108px;top:6px;width:16px;height:16px;background:#14246e;color:#fff;font-size:11px;line-height:16px;text-align:center;letter-spacing:-.3px">JP</div>
<div class="abs" style="left:1127px;top:3px;width:2px;height:21px;border-left:1px solid #808080;border-right:1px solid #fff"></div>
<svg class="abs" style="left:1135px;top:4px" width="20" height="20" viewBox="0 0 20 20"><path d="M13 7l2.500-4.500" stroke="#d05010" stroke-width="1.600"/><path d="M9 13q3 5 6 2q1-3-.500-6z" fill="#fff" stroke="#222" stroke-width="1.200"/><circle cx="7" cy="7.500" r="5.600" fill="#d4101c"/><circle cx="5.200" cy="5.400" r="2" fill="#ff7a80"/></svg>
<div class="t" style="left:1166px;top:5px;font-size:16px;line-height:18px;transform:scaleX(.78);transform-origin:0 0">A</div>
<div class="t" style="left:1179px;top:8px;font-size:13px;line-height:16px;font-weight:bold">:</div>
<div class="sunk1" style="left:1185px;top:2px;width:93px;height:23px"></div>
<div class="t" style="left:1189px;top:3px;font-size:14px;line-height:18px;font-weight:bold;letter-spacing:-1px">«</div>
<svg class="abs" style="left:1203px;top:5px" width="16" height="16" viewBox="0 0 16 16"><path d="M3 8l9-2 2 6-9 3z" fill="#9aa0a8" stroke="#555" stroke-width=".8"/><path d="M5 9.500l6-1.400 1 2.600-6 1.600z" fill="#3a4a8a"/><path d="M7.500 1v3h2.200l-3.400 4-3.300-4h2.200v-3z" fill="#30b030" stroke="#187018" stroke-width=".6" transform="rotate(-35 6 5)"/></svg>
<svg class="abs" style="left:1220px;top:4px" width="18" height="18" viewBox="0 0 18 18"><ellipse cx="8" cy="7.500" rx="6.500" ry="6" fill="#8a8a8a"/><ellipse cx="8" cy="7.500" rx="5" ry="4.600" fill="#c8c8c8"/><ellipse cx="8.500" cy="8" rx="2.600" ry="2.400" fill="#707070"/><path d="M12 13q3-1 3.500-4M13.500 15.500q4-1.500 4-6" stroke="#9a9ad8" stroke-width="1" fill="none"/></svg>
<div class="t" style="left:1243px;top:4px;font-size:12px;line-height:18px;letter-spacing:-.5px">16:32</div>
<div class="win" style="left:241px;top:85px;width:455px;height:586px">
<div class="tb tbi" style="left:3px;top:3px;width:449px"></div>
<svg class="abs" style="left:5px;top:4px" width="16" height="16" viewBox="0 0 17 16"><g fill="#102810"><rect x="0" y="0" width="7" height="11"/><rect x="9" y="0" width="7" height="11"/><rect x="1" y="12" width="5" height="1"/><rect x="10" y="12" width="5" height="1"/></g><rect x="1.500" y="2" width="4" height="5" fill="#9be08a"/><rect x="10.500" y="2" width="4" height="5" fill="#9be08a"/><rect x="1" y="8" width="5" height="2" fill="#3c9a34"/><rect x="10" y="8" width="5" height="2" fill="#3c9a34"/></svg>
<div class="tt" style="left:23px;top:3px;color:#d4d0c8">[COM9] X-CTU</div>
<div class="cb" style="left:401px;top:5px"><div class="abs" style="left:4px;top:9px;width:6px;height:2px;background:#000"></div></div>
<div class="cb" style="left:417px;top:5px"><div class="abs" style="left:3px;top:2px;width:9px;height:9px;border:1px solid #808080;border-top-width:2px;box-shadow:1px 1px #fff"></div></div>
<div class="cb" style="left:435px;top:5px"><svg class="abs" style="left:4px;top:3px" width="8" height="7" viewBox="0 0 8 7"><path d="M0 0h2l2 2.500 2-2.500h2l-3 3.500 3 3.500h-2l-2-2.500-2 2.500h-2l3-3.500z" fill="#000"/></svg></div>
<div class="t" style="left:10px;top:23px;color:#808080;line-height:14px">About</div>
<div class="t" style="left:54px;top:23px;color:#808080;line-height:14px">XModem</div>
<div class="abs" style="left:4px;top:61px;width:449px;height:504px;box-shadow:inset -1px -1px #404040,inset 1px 1px #fff,inset -2px -2px #808080"></div>
<div class="tab" style="left:6px;top:44px;width:66px;height:17px;line-height:16px">PC Settings</div>
<div class="tab" style="left:73px;top:44px;width:67px;height:17px;line-height:16px">Range Test</div>
<div class="tab" style="left:195px;top:44px;width:109px;height:17px;line-height:16px">Modem Configuration</div>
<div class="tab" style="left:139px;top:41px;width:56px;height:22px;line-height:18px;z-index:2">Terminal</div>
<div class="grp" style="left:8px;top:72px;width:90px;height:32px"><span>Line Status</span></div>
<div class="t" style="left:11px;top:81px;width:28px;height:15px;background:#28e028;color:#083408;text-align:center;line-height:15px">CTS</div>
<div class="t" style="left:42px;top:81px;width:22px;height:15px;background:#000;color:#fff;text-align:center;line-height:15px">CD</div>
<div class="t" style="left:66px;top:81px;width:28px;height:15px;background:#000;color:#fff;text-align:center;line-height:15px">DSR</div>
<div class="grp" style="left:105px;top:72px;width:145px;height:32px"><span>Assert</span></div>
<div class="sunk1" style="left:107px;top:81px;width:44px;height:16px"></div><div class="t" style="left:110px;top:82px;line-height:14px">DTR</div><div class="sunk" style="left:137px;top:82px;width:13px;height:13px;background:#fff"></div>
<div class="sunk1" style="left:153px;top:81px;width:44px;height:16px"></div><div class="t" style="left:156px;top:82px;line-height:14px">RTS</div><div class="sunk" style="left:183px;top:82px;width:13px;height:13px;background:#fff"></div>
<div class="sunk1" style="left:199px;top:81px;width:48px;height:16px"></div><div class="t" style="left:202px;top:82px;line-height:14px">Break</div><div class="sunk" style="left:233px;top:82px;width:13px;height:13px;background:#fff"></div>
<div class="btn" style="left:256px;top:66px;width:55px;height:39px;line-height:13px;padding-top:6px">Close<br>Com Port</div>
<div class="btn" style="left:313px;top:66px;width:53px;height:39px;line-height:13px;padding-top:6px">Assemble<br>Packet</div>
<div class="btn" style="left:367px;top:66px;width:44px;height:39px;line-height:13px;padding-top:6px">Clear<br>Screen</div>
<div class="btn" style="left:412px;top:66px;width:36px;height:39px;line-height:13px;padding-top:6px">Hide<br>Hex</div>
<div class="sunk" style="left:5px;top:110px;width:117px;height:452px;background:#fff"></div>
<pre class="mono t term" style="left:8px;top:112px"><span class="r"><b>............</b></span>
<span class="r"><b>.</b></span>
<span class="r"><b>............</b></span>
<span class="r"><b>......</b> !"#$%</span>
<span class="r">&amp;'()</span>
<span class="r">*+,-./012345</span>
<span class="r">6789:;&lt;=&gt;?</span>
<span class="r">@ABCDEFGHIJK</span>
<span class="r">LMNOPQRSTUVW</span>
<span class="r">XYZ[\]</span>
<span class="r">^_`abcdefghi</span>
<span class="r">jklmnopqrstu</span>
<span class="r">vwxyz{|}</span>
<span class="r">~ <b>..........</b></span>
<span class="r"><b>............</b></span>
<span class="r"><b>............</b></span>
<span class="r"><b>............</b></span>
<span class="r"><b>............</b></span>
<span class="r"><b>............</b></span>
<span class="r"><b>............</b></span>
<span class="r"><b>............</b></span>
<span class="r"><b>............</b></span>
<span class="r"><b>............</b></span>
<span class="r"><b>..........</b></span><span class="b">01</span>
<span class="b">23456789abcd</span>
<span class="b">efghijklmn</span></pre>
<div class="sunk" style="left:128px;top:110px;width:322px;height:452px;background:#fff"></div>
<pre class="mono t term" style="left:130px;top:112px"><span class="r">00 01 02 03 04 05 06 07 08 09 0A 0B</span>
<span class="r">0C 0D</span>
<span class="r">0E 0F 10 11 12 13 14 15 16 17 18 19</span>
<span class="r">1A 1B 1C 1D 1E 1F 20 21 22 23 24 25</span>
<span class="r">26 27 28 29 2A 2B 2C 2D 2E 2F 30 31</span>
<span class="r">32 33 34 35 36 37 38 39 3A 3B 3C 3D</span>
<span class="r">3E 3F 40 41 42 43 44 45 46 47 48 49</span>
<span class="r">4A 4B 4C 4D 4E 4F 50 51 52 53 54 55</span>
<span class="r">56 57 58 59 5A 5B 5C 5D 5E 5F 60 61</span>
<span class="r">62 63 64 65 66 67 68 69 6A 6B 6C 6D</span>
<span class="r">6E 6F 70 71 72 73 74 75 76 77 78 79</span>
<span class="r">7A 7B 7C 7D 7E 7F 80 81 82 83 84 85</span>
<span class="r">86 87 88 89 8A 8B 8C 8D 8E 8F 90 91</span>
<span class="r">92 93 94 95 96 97 98 99 9A 9B 9C 9D</span>
<span class="r">9E 9F A0 A1 A2 A3 A4 A5 A6 A7 A8 A9</span>
<span class="r">AA AB AC AD AE AF B0 B1 B2 B3 B4 B5</span>
<span class="r">B6 B7 B8 B9 BA BB BC BD BE BF C0 C1</span>
<span class="r">C2 C3 C4 C5 C6 C7 C8 C9 CA CB CC CD</span>
<span class="r">CE CF D0 D1 D2 D3 D4 D5 D6 D7 D8 D9</span>
<span class="r">DA DB DC DD DE DF E0 E1 E2 E3 E4 E5</span>
<span class="r">E6 E7 E8 E9 EA EB EC ED EE EF F0 F1</span>
<span class="r">F2 F3 F4 F5 F6 F7 F8 F9 FA FB FC FD</span>
<span class="r">FE FF</span> <span class="b">30 31 32 33 34 35 36 37 38 39</span>
<span class="b">61 62 63 64 65 66 67 68 69 6A 6B 6C</span>
<span class="b">6D 6E</span></pre>
<div class="sunk1 t" style="left:5px;top:566px;width:47px;height:15px;line-height:15px;padding-left:2px">COM9</div>
<div class="sunk1 t" style="left:54px;top:566px;width:242px;height:15px;line-height:15px;padding-left:2px">19200 8-N-1&nbsp; FLOW:NONE</div>
<div class="sunk1 t" style="left:297px;top:566px;width:99px;height:15px;line-height:15px;padding-left:2px">Rx: 256 bytes</div>
<div class="sunk1 t" style="left:398px;top:566px;width:53px;height:15px;line-height:15px;padding-left:2px"></div>
</div>
<div class="win" style="left:294px;top:711px;width:496px;height:183px">
<div class="tb tba" style="left:3px;top:3px;width:490px"></div>
<div class="tt" style="left:5px;top:3px;color:#fff;letter-spacing:-.2px">[COM9] Send Packet</div>
<div class="cb" style="left:476px;top:5px"><svg class="abs" style="left:4px;top:3px" width="8" height="7" viewBox="0 0 8 7"><path d="M0 0h2l2 2.500 2-2.500h2l-3 3.500 3 3.500h-2l-2-2.500-2 2.500h-2l3-3.500z" fill="#000"/></svg></div>
<div class="sunk" style="left:13px;top:32px;width:471px;height:102px;background:#fff"></div>
<div class="t" style="left:16px;top:35px;font-size:11px;line-height:13px;letter-spacing:-.19px">0123456789abcdefghijklmn</div>
<div class="t" style="left:14px;top:137px;line-height:14px">Byte count:&nbsp; 24</div>
<div class="btn" style="left:14px;top:154px;width:75px;height:22px;line-height:21px">Close</div>
<div class="btn" style="left:95px;top:154px;width:76px;height:23px;line-height:22px;border:1px solid #000;box-shadow:inset -1px -1px #404040,inset 1px 1px #fff,inset -2px -2px #808080">Send Data</div>
<div class="grp" style="left:321px;top:143px;width:163px;height:36px"><span>Display</span></div>
<div class="btn" style="left:335px;top:152px;width:75px;height:22px;line-height:21px">Clear</div>
<svg class="abs" style="left:429px;top:148px" width="12" height="12" viewBox="0 0 12 12"><circle cx="6" cy="6" r="5.500" fill="#fff"/><path d="M10 2A5.600 5.600 0 0 0 2 10" fill="none" stroke="#808080" stroke-width="1"/><path d="M9.200 2.800A4.500 4.500 0 0 0 2.800 9.200" fill="none" stroke="#404040" stroke-width="1"/><path d="M2 10A5.600 5.600 0 0 0 10 2" fill="none" stroke="#fff" stroke-width="1"/><path d="M2.800 9.200A4.500 4.500 0 0 0 9.200 2.800" fill="none" stroke="#d4d0c8" stroke-width="1"/></svg>
<svg class="abs" style="left:429px;top:164px" width="12" height="12" viewBox="0 0 12 12"><circle cx="6" cy="6" r="5.500" fill="#fff"/><path d="M10 2A5.600 5.600 0 0 0 2 10" fill="none" stroke="#808080" stroke-width="1"/><path d="M9.200 2.800A4.500 4.500 0 0 0 2.800 9.200" fill="none" stroke="#404040" stroke-width="1"/><path d="M2 10A5.600 5.600 0 0 0 10 2" fill="none" stroke="#fff" stroke-width="1"/><path d="M2.800 9.200A4.500 4.500 0 0 0 9.200 2.800" fill="none" stroke="#d4d0c8" stroke-width="1"/><circle cx="6" cy="6" r="1.800" fill="#000"/></svg>
<div class="t" style="left:446px;top:147px;line-height:14px">HEX</div>
<div class="t" style="left:446px;top:163px;line-height:14px">ASCII</div>
</div>
<div class="win" style="left:868px;top:356px;width:339px;height:556px">
<div class="tb tbi" style="left:3px;top:3px;width:333px;height:19px"></div>
<svg class="abs" style="left:5px;top:4px" width="16" height="17" viewBox="0 0 16 17"><path d="M1.500 .800h9l4 4v11.400h-13z" fill="#fff" stroke="#333" stroke-width="1"/><path d="M10.500 .800v4h4" fill="#e4e4e4" stroke="#333" stroke-width="1"/><rect x="0" y="3" width="7" height="8" fill="#1020a0"/><path d="M1 9l2-4.500 1.500 3 1-2 1 3.500" stroke="#ffe640" stroke-width="1" fill="none"/></svg>
<div class="abs" style="left:24px;top:6px"><svg width="152" height="14" viewBox="0 -11.44 152 14" style="display:block;overflow:visible"><text x="0.500" y="0" font-size="13" font-weight="bold" fill="#d4d0c8" textLength="151" lengthAdjust="spacingAndGlyphs">C:¥...¥デスクトップ¥memo.txt</text></svg></div>
<div class="abs" style="left:187px;top:6px"><svg width="36" height="14" viewBox="0 -11.44 36 14" style="display:block;overflow:visible"><text x="1" y="0" font-size="13" font-weight="bold" fill="#d4d0c8" textLength="35" lengthAdjust="spacingAndGlyphs">- 秀丸</text></svg></div>
<div class="cb" style="left:284px;top:6px"><div class="abs" style="left:4px;top:9px;width:6px;height:2px;background:#000"></div></div>
<div class="cb" style="left:300px;top:6px"><div class="abs" style="left:3px;top:2px;width:9px;height:9px;border:1px solid #000;border-top-width:2px"></div></div>
<div class="cb" style="left:318px;top:6px"><svg class="abs" style="left:4px;top:3px" width="8" height="7" viewBox="0 0 8 7"><path d="M0 0h2l2 2.500 2-2.500h2l-3 3.500 3 3.500h-2l-2-2.500-2 2.500h-2l3-3.500z" fill="#000"/></svg></div>
<div class="abs" style="left:11px;top:25px"><svg width="42" height="12" viewBox="0 -10.56 42 12" style="display:block;overflow:visible"><text x="0.500" y="0" font-size="12" fill="#808080" textLength="40" lengthAdjust="spacingAndGlyphs">ﾌｧｲﾙ(F)</text></svg></div>
<div class="abs" style="left:68px;top:25px"><svg width="38" height="12" viewBox="0 -10.56 38 12" style="display:block;overflow:visible"><text x="0" y="0" font-size="12" fill="#808080" textLength="36.500" lengthAdjust="spacingAndGlyphs">編集(E)</text></svg></div>
<div class="abs" style="left:121px;top:25px"><svg width="38" height="12" viewBox="0 -10.56 38 12" style="display:block;overflow:visible"><text x="0" y="0" font-size="12" fill="#808080" textLength="36.500" lengthAdjust="spacingAndGlyphs">検索(S)</text></svg></div>
<div class="abs" style="left:173px;top:25px"><svg width="54" height="12" viewBox="0 -10.56 54 12" style="display:block;overflow:visible"><text x="0.500" y="0" font-size="12" fill="#808080" textLength="52" lengthAdjust="spacingAndGlyphs">ｳｨﾝﾄﾞｳ(W)</text></svg></div>
<div class="abs" style="left:242px;top:25px"><svg width="36" height="12" viewBox="0 -10.56 36 12" style="display:block;overflow:visible"><text x="0.300" y="0" font-size="12" fill="#808080" textLength="34.400" lengthAdjust="spacingAndGlyphs">ﾏｸﾛ(M)</text></svg></div>
<div class="abs" style="left:11px;top:43px"><svg width="50" height="12" viewBox="0 -10.56 50 12" style="display:block;overflow:visible"><text x="0.500" y="0" font-size="12" fill="#808080" textLength="47" lengthAdjust="spacingAndGlyphs">その他(O)</text></svg></div>
<div class="t" style="left:299px;top:42px;line-height:14px;letter-spacing:-.7px">25: 7</div>
<div class="sunk1" style="left:4px;top:60px;width:331px;height:492px"></div>
<div class="abs" style="left:5px;top:61px;width:313px;height:490px;background:#000"></div>
<svg class="abs" style="left:14px;top:61px" width="304" height="12" viewBox="0 0 304 12"><path d="M0 10.5h302" stroke="#fff" stroke-width="1"/><path d="M0.5 0v10 M6.5 7v3 M12.5 7v3 M18.5 7v3 M24.5 7v3 M30.5 4v6 M36.5 7v3 M42.5 7v3 M48.5 7v3 M54.5 7v3 M60.5 0v10 M66.5 7v3 M72.5 7v3 M78.5 7v3 M84.5 7v3 M90.5 4v6 M96.5 7v3 M102.5 7v3 M108.5 7v3 M114.5 7v3 M120.5 0v10 M126.5 7v3 M132.5 7v3 M138.5 7v3 M144.5 7v3 M150.5 4v6 M156.5 7v3 M162.5 7v3 M168.5 7v3 M174.5 7v3 M180.5 0v10 M186.5 7v3 M192.5 7v3 M198.5 7v3 M204.5 7v3 M210.5 4v6 M216.5 7v3 M222.5 7v3 M228.5 7v3 M234.5 7v3 M240.5 0v10 M246.5 7v3 M252.5 7v3 M258.5 7v3 M264.5 7v3 M270.5 4v6 M276.5 7v3 M282.5 7v3 M288.5 7v3 M294.5 7v3 M300.5 0v10" stroke="#fff" stroke-width="1"/><rect x="36" y="1" width="7" height="10" fill="#fff"/></svg>
<div class="abs" style="left:318px;top:61px;width:16px;height:490px;background:#eae8e4"></div>
<div class="btn" style="left:318px;top:61px;width:16px;height:16px"><svg class="abs" style="left:4px;top:5px" width="8" height="5" viewBox="0 0 8 5"><path d="M0 4.500L4 .500 8 4.500z" fill="#808080"/></svg></div>
<div class="btn" style="left:318px;top:535px;width:16px;height:16px"><svg class="abs" style="left:4px;top:6px" width="8" height="5" viewBox="0 0 8 5"><path d="M0 .500L4 4.500 8 .500z" fill="#808080"/></svg></div>
<pre class="mono t memo" style="left:14px;top:74px"><span>port = COM9</span><svg width="6" height="9" viewBox="0 0 6 9"><path d="M3 .8v6.4M.9 4.6L3 7.4 5.1 4.6" stroke="#e41c1c" stroke-width="1.25" fill="none"/></svg>
<span></span><svg width="6" height="9" viewBox="0 0 6 9"><path d="M3 .8v6.4M.9 4.6L3 7.4 5.1 4.6" stroke="#e41c1c" stroke-width="1.25" fill="none"/></svg>
<span>XBee [A]</span><svg width="6" height="9" viewBox="0 0 6 9"><path d="M3 .8v6.4M.9 4.6L3 7.4 5.1 4.6" stroke="#e41c1c" stroke-width="1.25" fill="none"/></svg>
<span>Modem type = XB24</span><svg width="6" height="9" viewBox="0 0 6 9"><path d="M3 .8v6.4M.9 4.6L3 7.4 5.1 4.6" stroke="#e41c1c" stroke-width="1.25" fill="none"/></svg>
<span>firmware version = 1083</span><svg width="6" height="9" viewBox="0 0 6 9"><path d="M3 .8v6.4M.9 4.6L3 7.4 5.1 4.6" stroke="#e41c1c" stroke-width="1.25" fill="none"/></svg>
<span>13A2004000F069</span><svg width="6" height="9" viewBox="0 0 6 9"><path d="M3 .8v6.4M.9 4.6L3 7.4 5.1 4.6" stroke="#e41c1c" stroke-width="1.25" fill="none"/></svg>
<span>CH = 0B</span><svg width="6" height="9" viewBox="0 0 6 9"><path d="M3 .8v6.4M.9 4.6L3 7.4 5.1 4.6" stroke="#e41c1c" stroke-width="1.25" fill="none"/></svg>
<span>ID = ABCD</span><svg width="6" height="9" viewBox="0 0 6 9"><path d="M3 .8v6.4M.9 4.6L3 7.4 5.1 4.6" stroke="#e41c1c" stroke-width="1.25" fill="none"/></svg>
<span>DH = 0</span><svg width="6" height="9" viewBox="0 0 6 9"><path d="M3 .8v6.4M.9 4.6L3 7.4 5.1 4.6" stroke="#e41c1c" stroke-width="1.25" fill="none"/></svg>
<span>DL = 2</span><svg width="6" height="9" viewBox="0 0 6 9"><path d="M3 .8v6.4M.9 4.6L3 7.4 5.1 4.6" stroke="#e41c1c" stroke-width="1.25" fill="none"/></svg>
<span>MY = 1</span><svg width="6" height="9" viewBox="0 0 6 9"><path d="M3 .8v6.4M.9 4.6L3 7.4 5.1 4.6" stroke="#e41c1c" stroke-width="1.25" fill="none"/></svg>
<span>BD = 19200</span><svg width="6" height="9" viewBox="0 0 6 9"><path d="M3 .8v6.4M.9 4.6L3 7.4 5.1 4.6" stroke="#e41c1c" stroke-width="1.25" fill="none"/></svg>
<span>NO PARITY</span><svg width="6" height="9" viewBox="0 0 6 9"><path d="M3 .8v6.4M.9 4.6L3 7.4 5.1 4.6" stroke="#e41c1c" stroke-width="1.25" fill="none"/></svg>
<span>Timeout = 80</span><svg width="6" height="9" viewBox="0 0 6 9"><path d="M3 .8v6.4M.9 4.6L3 7.4 5.1 4.6" stroke="#e41c1c" stroke-width="1.25" fill="none"/></svg>
<span>API DISABLED</span><svg width="6" height="9" viewBox="0 0 6 9"><path d="M3 .8v6.4M.9 4.6L3 7.4 5.1 4.6" stroke="#e41c1c" stroke-width="1.25" fill="none"/></svg>
<span></span><svg width="6" height="9" viewBox="0 0 6 9"><path d="M3 .8v6.4M.9 4.6L3 7.4 5.1 4.6" stroke="#e41c1c" stroke-width="1.25" fill="none"/></svg>
<span>XBee [B]</span><svg width="6" height="9" viewBox="0 0 6 9"><path d="M3 .8v6.4M.9 4.6L3 7.4 5.1 4.6" stroke="#e41c1c" stroke-width="1.25" fill="none"/></svg>
<span>Modem type = XB24</span><svg width="6" height="9" viewBox="0 0 6 9"><path d="M3 .8v6.4M.9 4.6L3 7.4 5.1 4.6" stroke="#e41c1c" stroke-width="1.25" fill="none"/></svg>
<span>firmware version = 1083</span><svg width="6" height="9" viewBox="0 0 6 9"><path d="M3 .8v6.4M.9 4.6L3 7.4 5.1 4.6" stroke="#e41c1c" stroke-width="1.25" fill="none"/></svg>
<span>13A2004000F849</span><svg width="6" height="9" viewBox="0 0 6 9"><path d="M3 .8v6.4M.9 4.6L3 7.4 5.1 4.6" stroke="#e41c1c" stroke-width="1.25" fill="none"/></svg>
<span>CH = 0B</span><svg width="6" height="9" viewBox="0 0 6 9"><path d="M3 .8v6.4M.9 4.6L3 7.4 5.1 4.6" stroke="#e41c1c" stroke-width="1.25" fill="none"/></svg>
<span>ID = ABCD</span><svg width="6" height="9" viewBox="0 0 6 9"><path d="M3 .8v6.4M.9 4.6L3 7.4 5.1 4.6" stroke="#e41c1c" stroke-width="1.25" fill="none"/></svg>
<span>DH = 0</span><svg width="6" height="9" viewBox="0 0 6 9"><path d="M3 .8v6.4M.9 4.6L3 7.4 5.1 4.6" stroke="#e41c1c" stroke-width="1.25" fill="none"/></svg>
<span>DL = 1</span><svg width="6" height="9" viewBox="0 0 6 9"><path d="M3 .8v6.4M.9 4.6L3 7.4 5.1 4.6" stroke="#e41c1c" stroke-width="1.25" fill="none"/></svg>
<span class="cy">MY = 2</span><svg width="6" height="9" viewBox="0 0 6 9"><path d="M3 .8v6.4M.9 4.6L3 7.4 5.1 4.6" stroke="#e41c1c" stroke-width="1.25" fill="none"/></svg>
<span>BD = 19200</span><svg width="6" height="9" viewBox="0 0 6 9"><path d="M3 .8v6.4M.9 4.6L3 7.4 5.1 4.6" stroke="#e41c1c" stroke-width="1.25" fill="none"/></svg>
<span>NO PARITY</span><svg width="6" height="9" viewBox="0 0 6 9"><path d="M3 .8v6.4M.9 4.6L3 7.4 5.1 4.6" stroke="#e41c1c" stroke-width="1.25" fill="none"/></svg>
<span>Timeout = 80</span><svg width="6" height="9" viewBox="0 0 6 9"><path d="M3 .8v6.4M.9 4.6L3 7.4 5.1 4.6" stroke="#e41c1c" stroke-width="1.25" fill="none"/></svg>
<span>API DISABLED</span><svg width="6" height="9" viewBox="0 0 6 9"><path d="M3 .8v6.4M.9 4.6L3 7.4 5.1 4.6" stroke="#e41c1c" stroke-width="1.25" fill="none"/></svg>
<span></span><svg width="6" height="9" viewBox="0 0 6 9"><path d="M3 .8v6.4M.9 4.6L3 7.4 5.1 4.6" stroke="#e41c1c" stroke-width="1.25" fill="none"/></svg>
<span></span><svg width="6" height="9" viewBox="0 0 6 9"><path d="M3 .8v6.4M.9 4.6L3 7.4 5.1 4.6" stroke="#e41c1c" stroke-width="1.25" fill="none"/></svg>
<span></span><svg width="6" height="9" viewBox="0 0 6 9"><path d="M3 .8v6.4M.9 4.6L3 7.4 5.1 4.6" stroke="#e41c1c" stroke-width="1.25" fill="none"/></svg>
<span></span><svg width="6" height="9" viewBox="0 0 6 9"><path d="M3 .8v6.4M.9 4.6L3 7.4 5.1 4.6" stroke="#e41c1c" stroke-width="1.25" fill="none"/></svg>
<b>[EOF]</b></pre>
</div>
</body></html>
